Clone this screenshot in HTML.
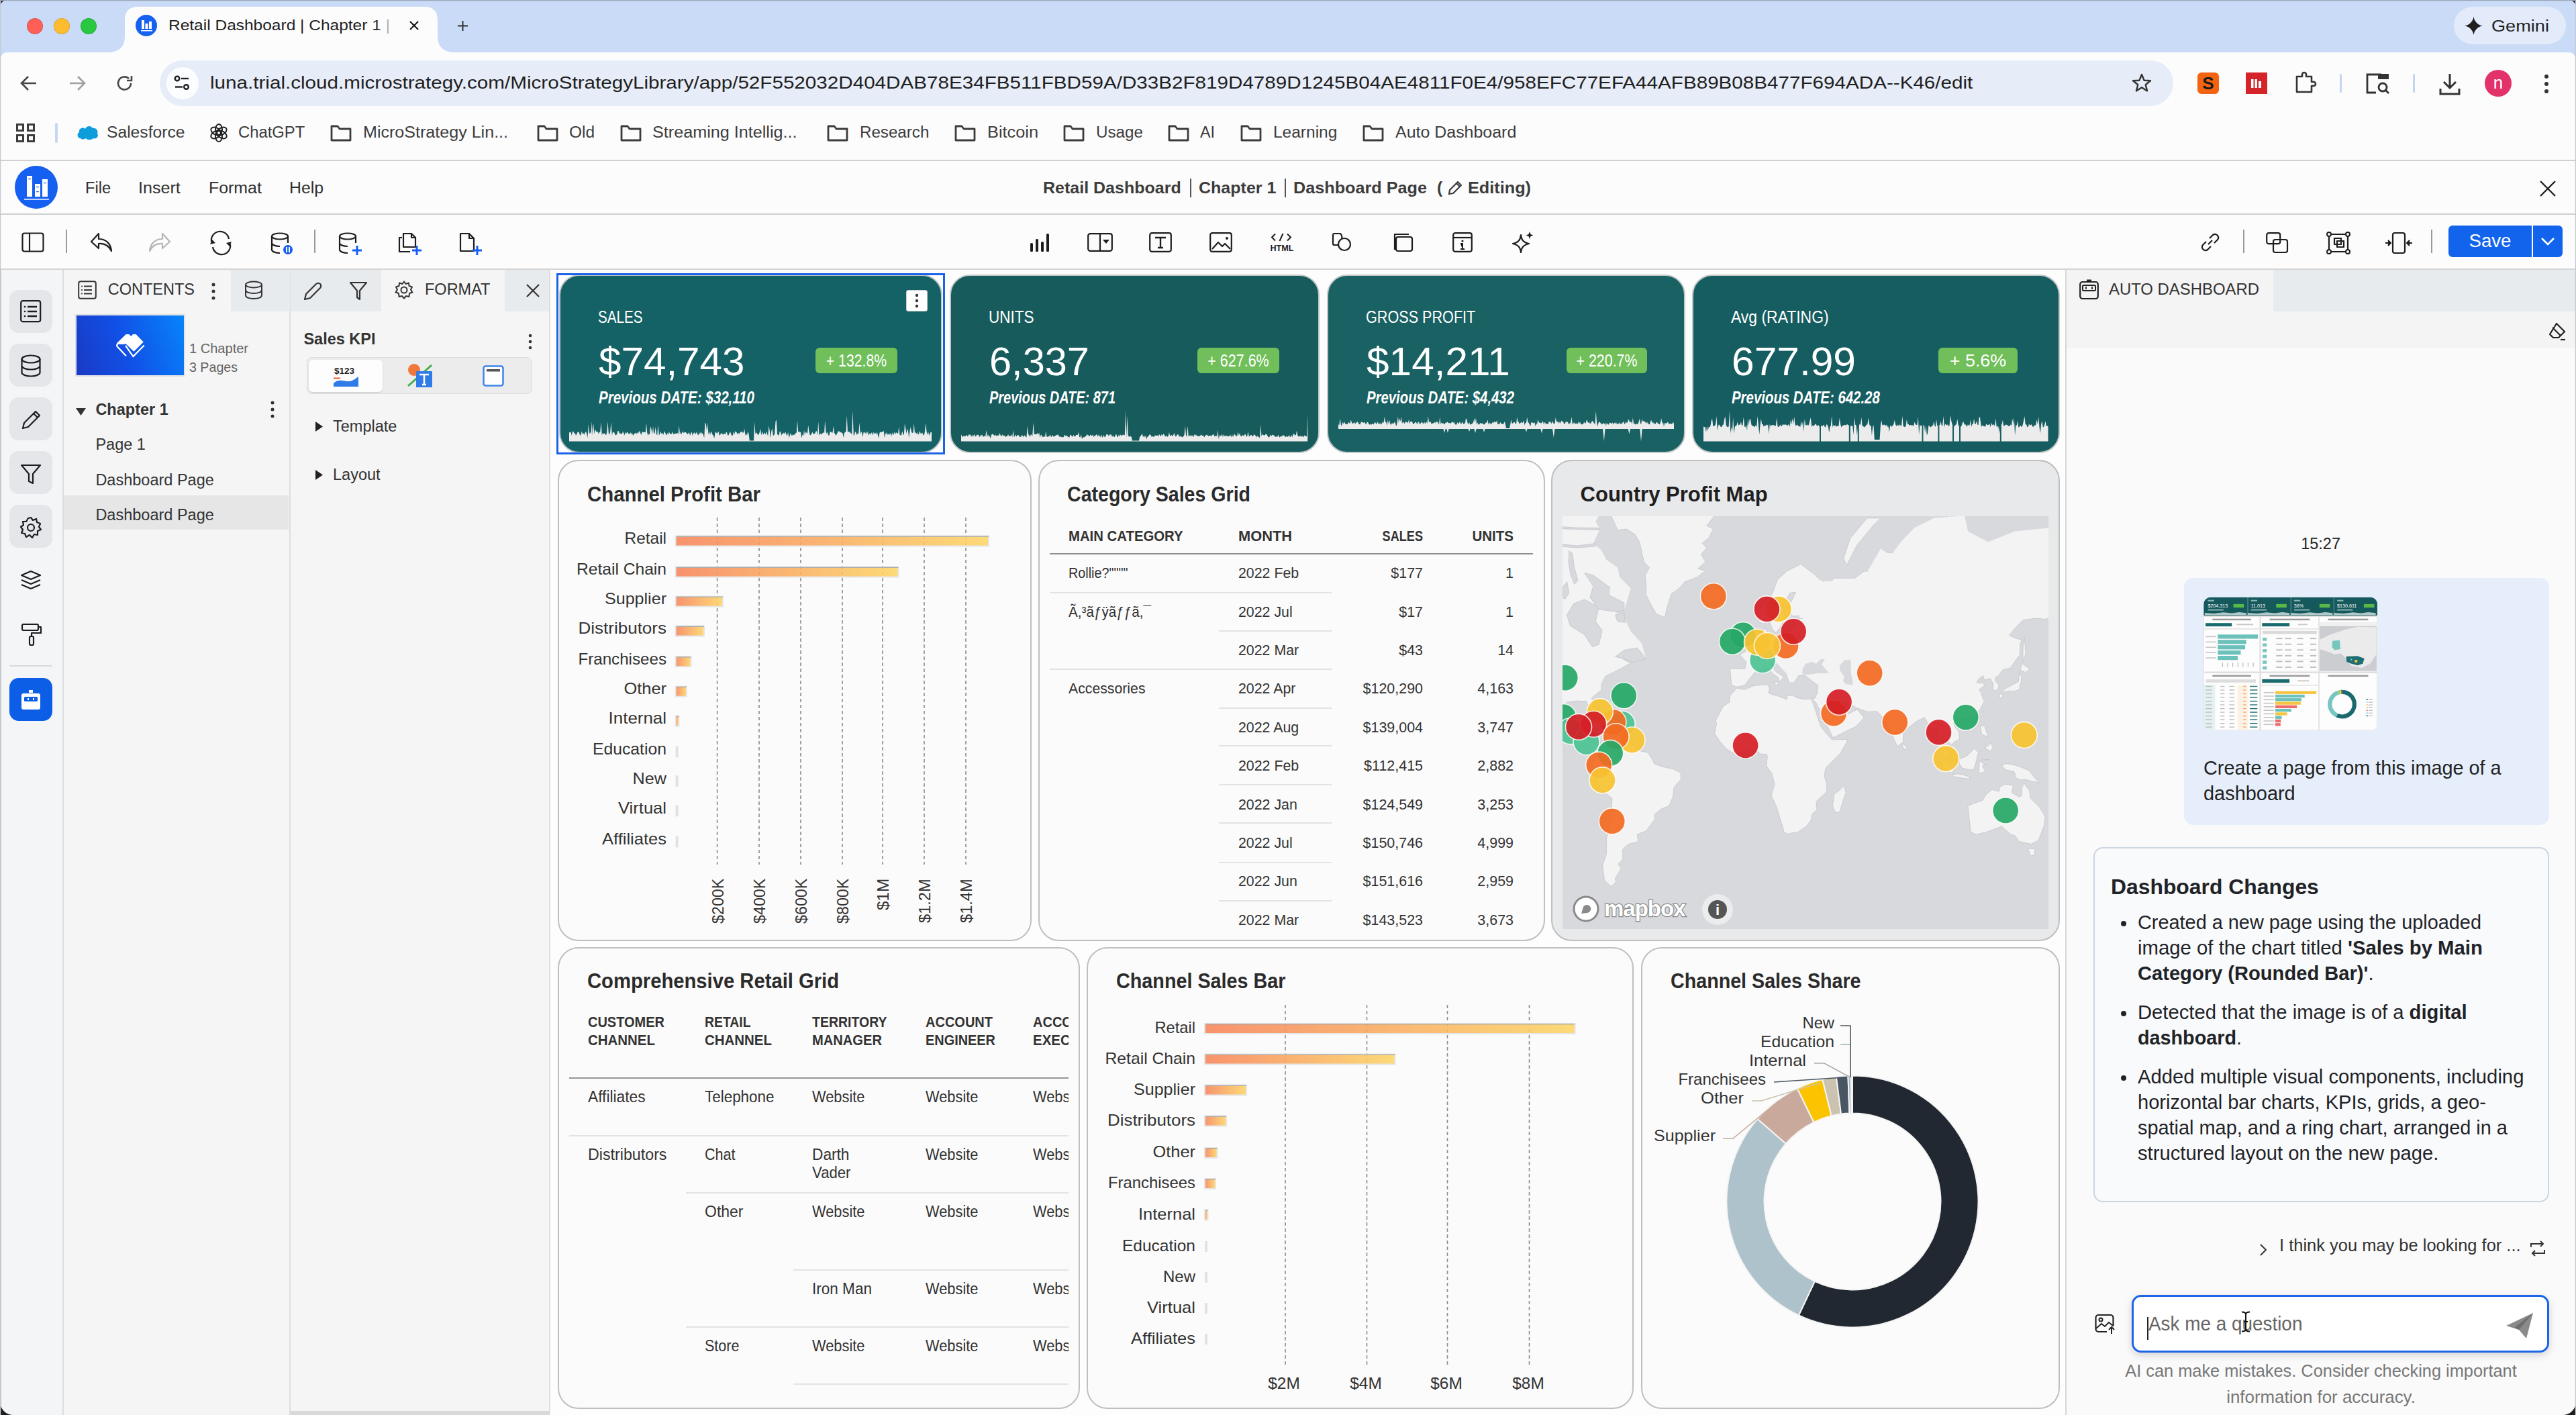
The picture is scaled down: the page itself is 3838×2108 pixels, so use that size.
<!DOCTYPE html><html><head><meta charset="utf-8"><title>Retail Dashboard</title>
<style>
html,body{margin:0;padding:0;}
body{width:3838px;height:2108px;position:relative;overflow:hidden;background:#fcfcfc;font-family:"Liberation Sans",sans-serif;}
.a{position:absolute;box-sizing:border-box;}
.t{position:absolute;white-space:nowrap;}
svg.a{overflow:visible;}
</style></head><body>
<div class="a" style="left:0.0px;top:0.0px;width:3838.0px;height:78.0px;background:#c9dbf6;"></div>
<svg class="a" style="left:160px;top:10px" width="520" height="68" viewBox="0 0 520 68"><path d="M0 68 Q26 68 26 44 L26 20 Q26 0 46 0 L472 0 Q492 0 492 20 L492 44 Q492 68 518 68 Z" fill="#fcfcfd"/></svg>
<div class="a" style="left:40.0px;top:27.0px;width:24.0px;height:24.0px;border-radius:50%;background:#fe5f57;border:1px solid rgba(0,0,0,0.12);"></div>
<div class="a" style="left:80.0px;top:27.0px;width:24.0px;height:24.0px;border-radius:50%;background:#febc2e;border:1px solid rgba(0,0,0,0.12);"></div>
<div class="a" style="left:120.0px;top:27.0px;width:24.0px;height:24.0px;border-radius:50%;background:#28c840;border:1px solid rgba(0,0,0,0.12);"></div>
<div class="a" style="left:202.0px;top:22.0px;width:32.0px;height:32.0px;border-radius:50%;background:#1661f0;"></div>
<svg class="a" style="left:202.0px;top:22.0px;" width="32" height="32" viewBox="0 0 32 32"><rect x="9" y="8" width="4" height="13" fill="#fff"/><rect x="14.5" y="13" width="4" height="8" fill="#fff"/><rect x="20" y="10" width="4" height="11" fill="#fff"/><rect x="8" y="23" width="17" height="1.5" fill="#fff"/></svg>
<div class="t" style="left:251.0px;top:27.4px;font-size:22.0px;line-height:22.0px;color:#1f1f1f;transform: scaleX(1.1135);transform-origin:0 0;">Retail Dashboard | Chapter 1 |</div>
<div class="a" style="left:560.0px;top:14.0px;width:40.0px;height:56.0px;background:linear-gradient(90deg,rgba(252,252,253,0),#fcfcfd 70%);"></div>
<svg class="a" style="left:609.0px;top:30.0px;" width="16" height="16" viewBox="0 0 16 16"><path d="M2 2L14 14M14 2L2 14" stroke="#1f1f1f" stroke-width="2.2"/></svg>
<svg class="a" style="left:681.0px;top:30.0px;" width="17" height="17" viewBox="0 0 17 17"><path d="M8.5 1V16M1 8.5H16" stroke="#333" stroke-width="2"/></svg>
<div class="a" style="left:3656.0px;top:10.0px;width:167.0px;height:56.0px;border-radius:28px;background:#e3ebfa;"></div>
<svg class="a" style="left:3672.0px;top:25.0px;" width="27" height="27" viewBox="0 0 27 27"><path d="M13.5 0 C14.5 7 20 12.5 27 13.5 C20 14.5 14.5 20 13.5 27 C12.5 20 7 14.5 0 13.5 C7 12.5 12.5 7 13.5 0Z" fill="#1f1f1f"/></svg>
<div class="t" style="left:3712.0px;top:27.5px;font-size:23.0px;line-height:23.0px;color:#1f1f1f;font-weight:500;transform: scaleX(1.1804);transform-origin:0 0;">Gemini</div>
<div class="a" style="left:0.0px;top:78.0px;width:3838.0px;height:80.0px;background:#fcfcfd;"></div>
<svg class="a" style="left:30.0px;top:112.0px;" width="26" height="24" viewBox="0 0 26 24"><path d="M24 12H3M12 2L2 12L12 22" stroke="#474747" stroke-width="2.6" fill="none"/></svg>
<svg class="a" style="left:102.0px;top:112.0px;" width="26" height="24" viewBox="0 0 26 24"><path d="M2 12H23M14 2L24 12L14 22" stroke="#a0a0a0" stroke-width="2.6" fill="none"/></svg>
<svg class="a" style="left:173.0px;top:111.0px;" width="26" height="26" viewBox="0 0 26 26"><path d="M22 13 A9.5 9.5 0 1 1 19 6" stroke="#474747" stroke-width="2.6" fill="none"/><path d="M23 2 V9 H16" stroke="#474747" stroke-width="2.6" fill="none"/></svg>
<div class="a" style="left:238.0px;top:90.0px;width:3000.0px;height:68.0px;border-radius:34px;background:#e7edf8;"></div>
<div class="a" style="left:248.0px;top:100.0px;width:48.0px;height:48.0px;border-radius:50%;background:#fcfdfe;"></div>
<svg class="a" style="left:258.0px;top:110.0px;" width="28" height="28" viewBox="0 0 28 28"><circle cx="6" cy="7" r="3.3" stroke="#222" stroke-width="2.4" fill="none"/><path d="M12 7H23" stroke="#222" stroke-width="2.4"/><circle cx="19.5" cy="19.5" r="3.3" stroke="#222" stroke-width="2.4" fill="none"/><path d="M3 19.5H14" stroke="#222" stroke-width="2.4"/></svg>
<div class="t" style="left:313.0px;top:110.1px;font-size:26.5px;line-height:26.5px;color:#1f1f1f;transform: scaleX(1.1178);transform-origin:0 0;">luna.trial.cloud.microstrategy.com/MicroStrategyLibrary/app/52F552032D404DAB78E34FB511FBD59A/D33B2F819D4789D1245B04AE4811F0E4/958EFC77EFA44AFB89B08B477F694ADA--K46/edit</div>
<svg class="a" style="left:3175.0px;top:108.0px;" width="32" height="32" viewBox="0 0 32 32"><path d="M16 3 L19.6 11.8 L29 12.3 L21.7 18.2 L24.1 27.4 L16 22.3 L7.9 27.4 L10.3 18.2 L3 12.3 L12.4 11.8 Z" stroke="#333" stroke-width="2.4" fill="none" stroke-linejoin="round"/></svg>
<div class="a" style="left:3274.0px;top:108.0px;width:32.0px;height:32.0px;border-radius:6px;background:#f4630f;"></div>
<div class="t" style="left:3290.0px;top:111.0px;font-size:26.0px;line-height:26.0px;color:#1a1a1a;font-weight:700;transform:translateX(-50%);transform-origin:50% 0;">S</div>
<div class="a" style="left:3346.0px;top:108.0px;width:32.0px;height:32.0px;background:#d5232a;"></div>
<svg class="a" style="left:3346.0px;top:108.0px;" width="32" height="32" viewBox="0 0 32 32"><rect x="8" y="10" width="3.5" height="13" fill="#fff"/><rect x="13.5" y="10" width="3.5" height="13" fill="#fff"/><rect x="19" y="13" width="4" height="10" fill="#fff"/></svg>
<svg class="a" style="left:3418.0px;top:106.0px;" width="34" height="34" viewBox="0 0 34 34"><path d="M4 8 H12 V5 A3 3 0 0 1 18 5 V8 H26 V16 H29 A3 3 0 0 1 29 22 H26 V31 H4 Z" stroke="#333" stroke-width="2.6" fill="none" stroke-linejoin="round"/></svg>
<div class="a" style="left:3486.0px;top:110.0px;width:3.0px;height:28.0px;background:#c4d5f2;border-radius:2px;"></div>
<svg class="a" style="left:3524.0px;top:108.0px;" width="38" height="34" viewBox="0 0 38 34"><path d="M16 30H3V3H24" stroke="#333" stroke-width="2.8" fill="none"/><rect x="19" y="2" width="16" height="8" fill="#333"/><circle cx="26" cy="22" r="6" stroke="#333" stroke-width="2.8" fill="none"/><path d="M30.5 26.5L35 31" stroke="#333" stroke-width="3"/></svg>
<div class="a" style="left:3595.0px;top:110.0px;width:3.0px;height:28.0px;background:#c4d5f2;border-radius:2px;"></div>
<svg class="a" style="left:3633.0px;top:108.0px;" width="34" height="34" viewBox="0 0 34 34"><path d="M17 2V22M8 14L17 23L26 14" stroke="#333" stroke-width="3" fill="none"/><path d="M3 24V32H31V24" stroke="#333" stroke-width="3" fill="none"/></svg>
<div class="a" style="left:3702.0px;top:104.0px;width:40.0px;height:40.0px;border-radius:50%;background:#e3326a;"></div>
<div class="t" style="left:3722.0px;top:110.0px;font-size:26.0px;line-height:26.0px;color:#fff;transform:translateX(-50%);transform-origin:50% 0;">n</div>
<svg class="a" style="left:3788.0px;top:110.0px;" width="12" height="30" viewBox="0 0 12 30"><circle cx="6" cy="4" r="3" fill="#333"/><circle cx="6" cy="15" r="3" fill="#333"/><circle cx="6" cy="26" r="3" fill="#333"/></svg>
<div class="a" style="left:0.0px;top:158.0px;width:3838.0px;height:80.0px;background:#fcfcfd;"></div>
<svg class="a" style="left:24.0px;top:184.0px;" width="28" height="28" viewBox="0 0 28 28"><rect x="1.5" y="1.5" width="9" height="9" stroke="#3c3c3c" stroke-width="3" fill="none"/><rect x="17.5" y="1.5" width="9" height="9" stroke="#3c3c3c" stroke-width="3" fill="none"/><rect x="1.5" y="17.5" width="9" height="9" stroke="#3c3c3c" stroke-width="3" fill="none"/><rect x="17.5" y="17.5" width="9" height="9" stroke="#3c3c3c" stroke-width="3" fill="none"/></svg>
<div class="a" style="left:82.0px;top:183.0px;width:4.0px;height:30.0px;background:#c7d7f3;border-radius:2px;"></div>
<svg class="a" style="left:114.0px;top:186.0px;" width="33" height="23" viewBox="0 0 33 23"><path d="M6 20 C1 20 0 13 4 11 C3 5 10 3 13 6 C15 1 22 1 24 5 C29 4 33 9 31 13 C34 17 29 22 25 20 C22 23 16 23 14 20 C11 22 8 22 6 20Z" fill="#0d9ddb"/></svg>
<div class="t" style="left:158.8px;top:186.1px;font-size:23.5px;line-height:23.5px;color:#3c3c3c;transform: scaleX(1.0486);transform-origin:0 0;">Salesforce</div>
<svg class="a" style="left:312.0px;top:184.0px;" width="28" height="28" viewBox="0 0 28 28"><g stroke="#222" stroke-width="2" fill="none"><ellipse cx="14" cy="9" rx="5" ry="8"/><ellipse cx="14" cy="9" rx="5" ry="8" transform="rotate(60 14 14)"/><ellipse cx="14" cy="9" rx="5" ry="8" transform="rotate(120 14 14)"/><ellipse cx="14" cy="9" rx="5" ry="8" transform="rotate(180 14 14)"/><ellipse cx="14" cy="9" rx="5" ry="8" transform="rotate(240 14 14)"/><ellipse cx="14" cy="9" rx="5" ry="8" transform="rotate(300 14 14)"/></g></svg>
<div class="t" style="left:354.8px;top:186.1px;font-size:23.5px;line-height:23.5px;color:#3c3c3c;transform: scaleX(1.0129);transform-origin:0 0;">ChatGPT</div>
<svg class="a" style="left:492.0px;top:185.0px;" width="32" height="27" viewBox="0 0 32 27"><path d="M2 3H11L14 7H30V24H2Z" stroke="#3c3c3c" stroke-width="2.8" fill="none" stroke-linejoin="round"/></svg>
<div class="t" style="left:540.8px;top:186.1px;font-size:23.5px;line-height:23.5px;color:#3c3c3c;transform: scaleX(1.0672);transform-origin:0 0;">MicroStrategy Lin...</div>
<svg class="a" style="left:799.7px;top:185.0px;" width="32" height="27" viewBox="0 0 32 27"><path d="M2 3H11L14 7H30V24H2Z" stroke="#3c3c3c" stroke-width="2.8" fill="none" stroke-linejoin="round"/></svg>
<div class="t" style="left:848.0px;top:186.1px;font-size:23.5px;line-height:23.5px;color:#3c3c3c;transform: scaleX(1.0393);transform-origin:0 0;">Old</div>
<svg class="a" style="left:924.0px;top:185.0px;" width="32" height="27" viewBox="0 0 32 27"><path d="M2 3H11L14 7H30V24H2Z" stroke="#3c3c3c" stroke-width="2.8" fill="none" stroke-linejoin="round"/></svg>
<div class="t" style="left:972.0px;top:186.1px;font-size:23.5px;line-height:23.5px;color:#3c3c3c;transform: scaleX(1.0716);transform-origin:0 0;">Streaming Intellig...</div>
<svg class="a" style="left:1232.0px;top:185.0px;" width="32" height="27" viewBox="0 0 32 27"><path d="M2 3H11L14 7H30V24H2Z" stroke="#3c3c3c" stroke-width="2.8" fill="none" stroke-linejoin="round"/></svg>
<div class="t" style="left:1280.7px;top:186.1px;font-size:23.5px;line-height:23.5px;color:#3c3c3c;transform: scaleX(1.0274);transform-origin:0 0;">Research</div>
<svg class="a" style="left:1422.0px;top:185.0px;" width="32" height="27" viewBox="0 0 32 27"><path d="M2 3H11L14 7H30V24H2Z" stroke="#3c3c3c" stroke-width="2.8" fill="none" stroke-linejoin="round"/></svg>
<div class="t" style="left:1470.5px;top:186.1px;font-size:23.5px;line-height:23.5px;color:#3c3c3c;transform: scaleX(1.0778);transform-origin:0 0;">Bitcoin</div>
<svg class="a" style="left:1584.0px;top:185.0px;" width="32" height="27" viewBox="0 0 32 27"><path d="M2 3H11L14 7H30V24H2Z" stroke="#3c3c3c" stroke-width="2.8" fill="none" stroke-linejoin="round"/></svg>
<div class="t" style="left:1632.8px;top:186.1px;font-size:23.5px;line-height:23.5px;color:#3c3c3c;transform: scaleX(1.0279);transform-origin:0 0;">Usage</div>
<svg class="a" style="left:1740.0px;top:185.0px;" width="32" height="27" viewBox="0 0 32 27"><path d="M2 3H11L14 7H30V24H2Z" stroke="#3c3c3c" stroke-width="2.8" fill="none" stroke-linejoin="round"/></svg>
<div class="t" style="left:1788.0px;top:186.1px;font-size:23.5px;line-height:23.5px;color:#3c3c3c;transform: scaleX(0.9909);transform-origin:0 0;">AI</div>
<svg class="a" style="left:1848.0px;top:185.0px;" width="32" height="27" viewBox="0 0 32 27"><path d="M2 3H11L14 7H30V24H2Z" stroke="#3c3c3c" stroke-width="2.8" fill="none" stroke-linejoin="round"/></svg>
<div class="t" style="left:1896.7px;top:186.1px;font-size:23.5px;line-height:23.5px;color:#3c3c3c;transform: scaleX(1.0424);transform-origin:0 0;">Learning</div>
<svg class="a" style="left:2030.0px;top:185.0px;" width="32" height="27" viewBox="0 0 32 27"><path d="M2 3H11L14 7H30V24H2Z" stroke="#3c3c3c" stroke-width="2.8" fill="none" stroke-linejoin="round"/></svg>
<div class="t" style="left:2078.8px;top:186.1px;font-size:23.5px;line-height:23.5px;color:#3c3c3c;transform: scaleX(1.0614);transform-origin:0 0;">Auto Dashboard</div>
<div class="a" style="left:0.0px;top:238.0px;width:3838.0px;height:2.0px;background:#d0d0d0;"></div>
<div class="a" style="left:0.0px;top:240.0px;width:3838.0px;height:78.0px;background:#fcfcfc;"></div>
<div class="a" style="left:22.0px;top:247.0px;width:64.0px;height:64.0px;border-radius:50%;background:#1560f1;"></div>
<svg class="a" style="left:22.0px;top:247.0px;" width="64" height="64" viewBox="0 0 64 64"><rect x="18" y="15" width="8" height="31" fill="#fff"/><rect x="30" y="27" width="8" height="19" fill="#fff"/><rect x="41" y="20" width="8" height="26" fill="#fff"/><rect x="14" y="49" width="37" height="1.6" fill="#fff"/><rect x="20" y="19" width="4" height="1.2" fill="#1560f1"/><rect x="32" y="31" width="4" height="1.2" fill="#1560f1"/><rect x="32" y="38" width="4" height="1.2" fill="#1560f1"/><rect x="43" y="25" width="4" height="1.2" fill="#1560f1"/></svg>
<div class="t" style="left:127.0px;top:269.1px;font-size:23.5px;line-height:23.5px;color:#2f2f2f;transform: scaleX(1.0037);transform-origin:0 0;">File</div>
<div class="t" style="left:206.0px;top:269.1px;font-size:23.5px;line-height:23.5px;color:#2f2f2f;transform: scaleX(1.0670);transform-origin:0 0;">Insert</div>
<div class="t" style="left:311.0px;top:269.1px;font-size:23.5px;line-height:23.5px;color:#2f2f2f;transform: scaleX(1.0588);transform-origin:0 0;">Format</div>
<div class="t" style="left:431.0px;top:269.1px;font-size:23.5px;line-height:23.5px;color:#2f2f2f;transform: scaleX(1.0556);transform-origin:0 0;">Help</div>
<div class="t" style="left:1554.0px;top:268.3px;font-size:24.5px;line-height:24.5px;color:#3c3c3c;font-weight:700;transform: scaleX(1.0208);transform-origin:0 0;">Retail Dashboard</div>
<div class="a" style="left:1773.0px;top:266.0px;width:2.0px;height:28.0px;background:#555;"></div>
<div class="t" style="left:1786.0px;top:268.3px;font-size:24.5px;line-height:24.5px;color:#3c3c3c;font-weight:700;transform: scaleX(1.0212);transform-origin:0 0;">Chapter 1</div>
<div class="a" style="left:1914.0px;top:266.0px;width:2.0px;height:28.0px;background:#555;"></div>
<div class="t" style="left:1927.0px;top:268.3px;font-size:24.5px;line-height:24.5px;color:#3c3c3c;font-weight:700;transform: scaleX(1.0293);transform-origin:0 0;">Dashboard Page</div>
<div class="t" style="left:2141.0px;top:268.3px;font-size:24.5px;line-height:24.5px;color:#3c3c3c;font-weight:700;">(</div>
<svg class="a" style="left:2155.0px;top:267.0px;" width="26" height="26" viewBox="0 0 26 26"><path d="M4 22 L5 16 L17 4 L22 9 L10 21 Z M15 6 L20 11" stroke="#3c3c3c" stroke-width="2.2" fill="none" stroke-linejoin="round"/></svg>
<div class="t" style="left:2187.0px;top:268.3px;font-size:24.5px;line-height:24.5px;color:#3c3c3c;font-weight:700;transform: scaleX(1.0308);transform-origin:0 0;">Editing)</div>
<svg class="a" style="left:3782.0px;top:267.0px;" width="28" height="28" viewBox="0 0 28 28"><path d="M3 3L25 25M25 3L3 25" stroke="#222" stroke-width="2.4"/></svg>
<div class="a" style="left:0.0px;top:318.0px;width:3838.0px;height:2.0px;background:#d0d0d0;"></div>
<div class="a" style="left:0.0px;top:320.0px;width:3838.0px;height:80.0px;background:#fcfcfc;"></div>
<svg class="a" style="left:32.0px;top:346.0px;" width="34" height="30" viewBox="0 0 34 30"><rect x="1.5" y="1.5" width="31" height="27" rx="3" stroke="#1d1d1f" stroke-width="2.2" fill="none" stroke-linejoin="round"/><path d="M12 1.5V28.5" stroke="#1d1d1f" stroke-width="2.2" fill="none" stroke-linejoin="round"/></svg>
<div class="a" style="left:98.0px;top:342.0px;width:2.0px;height:35.0px;background:#9a9a9a;"></div>
<svg class="a" style="left:134.0px;top:346.0px;" width="34" height="30" viewBox="0 0 34 30"><path d="M13 2 L2 14 L13 24 V17 C22 16 28 20 32 28 C31 17 24 10 13 10 Z" stroke="#1d1d1f" stroke-width="2.2" fill="none" stroke-linejoin="round"/></svg>
<svg class="a" style="left:221.0px;top:346.0px;" width="34" height="30" viewBox="0 0 34 30"><path d="M21 2 L32 14 L21 24 V17 C12 16 6 20 2 28 C3 17 10 10 21 10 Z" stroke="#b5b5b5" stroke-width="2.2" fill="none" stroke-linejoin="round"/></svg>
<svg class="a" style="left:311.0px;top:346.0px;" width="36" height="32" viewBox="0 0 36 32"><path d="M4 14 A13 13 0 0 1 30 10" stroke="#1d1d1f" stroke-width="2.2" fill="none" stroke-linejoin="round"/><path d="M32 18 A13 13 0 0 1 6 22" stroke="#1d1d1f" stroke-width="2.2" fill="none" stroke-linejoin="round"/><path d="M26 16 L31 21 L34 14Z" fill="#1d1d1f"/><path d="M10 16 L5 11 L2 18Z" fill="#1d1d1f"/></svg>
<svg class="a" style="left:403.0px;top:346.0px;" width="34" height="34" viewBox="0 0 34 34"><ellipse cx="14" cy="6" rx="12" ry="4.5" stroke="#1d1d1f" stroke-width="2.2" fill="none" stroke-linejoin="round"/><path d="M2 6V26C2 29 8 31 14 31M26 6V16M2 16C2 19 8 21 14 21" stroke="#1d1d1f" stroke-width="2.2" fill="none" stroke-linejoin="round"/><circle cx="26" cy="26" r="7" fill="#1560f1"/><rect x="23" y="22" width="2" height="8" fill="#fff"/><rect x="27" y="22" width="2" height="8" fill="#fff"/></svg>
<div class="a" style="left:468.0px;top:342.0px;width:2.0px;height:35.0px;background:#9a9a9a;"></div>
<svg class="a" style="left:504.0px;top:346.0px;" width="36" height="34" viewBox="0 0 36 34"><ellipse cx="14" cy="6" rx="12" ry="4.5" stroke="#1d1d1f" stroke-width="2.2" fill="none" stroke-linejoin="round"/><path d="M2 6V26C2 29 8 31 14 31M26 6V16M2 16C2 19 8 21 14 21" stroke="#1d1d1f" stroke-width="2.2" fill="none" stroke-linejoin="round"/><path d="M28 20V34M21 27H35" stroke="#1560f1" stroke-width="3"/></svg>
<svg class="a" style="left:593.0px;top:346.0px;" width="36" height="34" viewBox="0 0 36 34"><path d="M6 8H2V29H18" stroke="#1d1d1f" stroke-width="2.2" fill="none" stroke-linejoin="round"/><path d="M8 2H20L26 8V22H8Z" stroke="#1d1d1f" stroke-width="2.2" fill="none" stroke-linejoin="round"/><path d="M20 2V8H26" stroke="#1d1d1f" stroke-width="2.2" fill="none" stroke-linejoin="round"/><path d="M28 20V34M21 27H35" stroke="#1560f1" stroke-width="3"/></svg>
<svg class="a" style="left:683.0px;top:346.0px;" width="36" height="34" viewBox="0 0 36 34"><path d="M3 2H16L23 9V28H3Z" stroke="#1d1d1f" stroke-width="2.2" fill="none" stroke-linejoin="round"/><path d="M16 2V9H23" stroke="#1d1d1f" stroke-width="2.2" fill="none" stroke-linejoin="round"/><path d="M28 20V34M21 27H35" stroke="#1560f1" stroke-width="3"/></svg>
<svg class="a" style="left:1534.0px;top:346.0px;" width="30" height="30" viewBox="0 0 30 30"><g fill="#1d1d1f"><rect x="1" y="16" width="4" height="13" rx="1.5"/><rect x="9" y="10" width="4" height="19" rx="1.5"/><rect x="17" y="14" width="4" height="15" rx="1.5"/><rect x="25" y="2" width="4" height="27" rx="1.5"/></g></svg>
<svg class="a" style="left:1620.0px;top:347.0px;" width="38" height="28" viewBox="0 0 38 28"><rect x="1.2" y="1.2" width="35.6" height="25.6" rx="3" stroke="#1d1d1f" stroke-width="2.2" fill="none" stroke-linejoin="round"/><path d="M19 1V27" stroke="#1d1d1f" stroke-width="2.2" fill="none" stroke-linejoin="round"/><path d="M23 10H33L28 16Z" fill="#1d1d1f"/></svg>
<svg class="a" style="left:1712.0px;top:346.0px;" width="34" height="30" viewBox="0 0 34 30"><rect x="1.2" y="1.2" width="31.6" height="27.6" rx="3" stroke="#1d1d1f" stroke-width="2.2" fill="none" stroke-linejoin="round"/><path d="M9 8H25M17 8V23M13 23H21" stroke="#1d1d1f" stroke-width="2.4"/></svg>
<svg class="a" style="left:1802.0px;top:346.0px;" width="34" height="30" viewBox="0 0 34 30"><rect x="1.2" y="1.2" width="31.6" height="27.6" rx="3" stroke="#1d1d1f" stroke-width="2.2" fill="none" stroke-linejoin="round"/><path d="M4 25L13 15L19 21L23 17L31 25" stroke="#1d1d1f" stroke-width="2.2" fill="none" stroke-linejoin="round"/><circle cx="26" cy="9" r="2" fill="#1d1d1f"/></svg>
<svg class="a" style="left:1893.0px;top:347.0px;" width="32" height="13" viewBox="0 0 32 13"><path d="M7 1.5L2 6.5L7 11.5M25 1.5L30 6.5L25 11.5M18.5 1L13.5 12" stroke="#1d1d1f" stroke-width="2" fill="none"/></svg>
<div class="t" style="left:1909.5px;top:363.9px;font-size:12.5px;line-height:12.5px;color:#1d1d1f;font-weight:700;transform:translateX(-50%) scaleX(1.0081);transform-origin:50% 0;">HTML</div>
<svg class="a" style="left:1985.0px;top:346.0px;" width="30" height="30" viewBox="0 0 30 30"><path d="M14 10A8 8 0 0 0 12 2H3A2 2 0 0 0 1 4V17A2 2 0 0 0 3 19H9" stroke="#1d1d1f" stroke-width="2.2" fill="none" stroke-linejoin="round"/><circle cx="18" cy="18" r="9" stroke="#1d1d1f" stroke-width="2.2" fill="none" stroke-linejoin="round"/></svg>
<svg class="a" style="left:2072.0px;top:346.0px;" width="34" height="30" viewBox="0 0 34 30"><path d="M6 26V3H27" stroke="#1d1d1f" stroke-width="2.2" fill="none" stroke-linejoin="round"/><rect x="8" y="7" width="24" height="21" rx="3" stroke="#1d1d1f" stroke-width="2.2" fill="none" stroke-linejoin="round"/></svg>
<svg class="a" style="left:2164.0px;top:346.0px;" width="30" height="30" viewBox="0 0 30 30"><rect x="1.2" y="1.2" width="27.6" height="27.6" rx="3" stroke="#1d1d1f" stroke-width="2.2" fill="none" stroke-linejoin="round"/><path d="M1 8H29" stroke="#1d1d1f" stroke-width="2.2" fill="none" stroke-linejoin="round"/><circle cx="15" cy="13" r="1.6" fill="#1d1d1f"/><path d="M12 17H15V25M12 25H18" stroke="#1d1d1f" stroke-width="2"/></svg>
<svg class="a" style="left:2252.0px;top:344.0px;" width="34" height="34" viewBox="0 0 34 34"><path d="M14 6 C15 14 18 17 26 19 C18 21 15 24 14 32 C13 24 10 21 2 19 C10 17 13 14 14 6Z" stroke="#1d1d1f" stroke-width="2.2" fill="none" stroke-linejoin="round"/><path d="M27 1 L28.5 5 L32.5 6.5 L28.5 8 L27 12 L25.5 8 L21.5 6.5 L25.5 5Z" fill="#1d1d1f"/></svg>
<svg class="a" style="left:3276.0px;top:344.0px;" width="34" height="34" viewBox="0 0 34 34"><path d="M14 20L20 14" stroke="#1d1d1f" stroke-width="2.2" fill="none" stroke-linejoin="round"/><path d="M11 16L6 21A5 5 0 0 0 13 28L18 23" stroke="#1d1d1f" stroke-width="2.2" fill="none" stroke-linejoin="round"/><path d="M16 11L21 6A5 5 0 0 1 28 13L23 18" stroke="#1d1d1f" stroke-width="2.2" fill="none" stroke-linejoin="round"/></svg>
<div class="a" style="left:3342.0px;top:342.0px;width:2.0px;height:35.0px;background:#9a9a9a;"></div>
<svg class="a" style="left:3376.0px;top:346.0px;" width="34" height="32" viewBox="0 0 34 32"><rect x="1.2" y="1.2" width="20" height="16" rx="3" stroke="#1d1d1f" stroke-width="2.2" fill="none" stroke-linejoin="round"/><rect x="11" y="11" width="21" height="19" rx="3" stroke="#1d1d1f" stroke-width="2.2" fill="none" stroke-linejoin="round"/></svg>
<svg class="a" style="left:3466.0px;top:345.0px;" width="36" height="34" viewBox="0 0 36 34"><rect x="4" y="4" width="28" height="26" stroke="#1d1d1f" stroke-width="2.2" fill="none" stroke-linejoin="round"/><rect x="12" y="10" width="10" height="9" stroke="#1d1d1f" stroke-width="2.2" fill="none" stroke-linejoin="round"/><rect x="16" y="14" width="10" height="9" stroke="#1d1d1f" stroke-width="2.2" fill="none" stroke-linejoin="round"/><circle cx="4" cy="4" r="3" fill="#fcfcfc" stroke="#1d1d1f" stroke-width="2"/><circle cx="32" cy="4" r="3" fill="#fcfcfc" stroke="#1d1d1f" stroke-width="2"/><circle cx="4" cy="30" r="3" fill="#fcfcfc" stroke="#1d1d1f" stroke-width="2"/><circle cx="32" cy="30" r="3" fill="#fcfcfc" stroke="#1d1d1f" stroke-width="2"/></svg>
<svg class="a" style="left:3553.0px;top:345.0px;" width="42" height="34" viewBox="0 0 42 34"><rect x="12" y="2" width="18" height="30" rx="3" stroke="#1d1d1f" stroke-width="2.2" fill="none" stroke-linejoin="round"/><path d="M1 17H9M5 13L9 17L5 21" stroke="#1d1d1f" stroke-width="2" fill="#1d1d1f"/><path d="M41 17H33M37 13L33 17L37 21" stroke="#1d1d1f" stroke-width="2" fill="#1d1d1f"/></svg>
<div class="a" style="left:3622.0px;top:342.0px;width:2.0px;height:35.0px;background:#9a9a9a;"></div>
<div class="a" style="left:3648.0px;top:336.0px;width:124.0px;height:47.0px;background:#1264ec;border-radius:6px 0 0 6px;"></div>
<div class="t" style="left:3710.0px;top:346.1px;font-size:27.0px;line-height:27.0px;color:#fff;transform:translateX(-50%) scaleX(1.0236);transform-origin:50% 0;">Save</div>
<div class="a" style="left:3774.0px;top:336.0px;width:44.0px;height:47.0px;background:#1264ec;border-radius:0 6px 6px 0;"></div>
<svg class="a" style="left:3784.0px;top:350.0px;" width="24" height="18" viewBox="0 0 24 18"><path d="M3 5L12 14L21 5" stroke="#fff" stroke-width="2.6" fill="none"/></svg>
<div class="a" style="left:0.0px;top:400.0px;width:3838.0px;height:2.0px;background:#d4d4d4;"></div>
<div class="a" style="left:0.0px;top:402.0px;width:95.0px;height:1706.0px;background:#f4f5f7;border-right:2px solid #dcdde0;"></div>
<div class="a" style="left:0.0px;top:402.0px;width:1.5px;height:1706.0px;background:#c8c8c8;"></div>
<div class="a" style="left:14.0px;top:432.0px;width:64.0px;height:64.0px;border-radius:14px;background:#e4e6ea;"></div>
<div class="a" style="left:14.0px;top:512.0px;width:64.0px;height:64.0px;border-radius:14px;background:#e4e6ea;"></div>
<div class="a" style="left:14.0px;top:592.0px;width:64.0px;height:64.0px;border-radius:14px;background:#e4e6ea;"></div>
<div class="a" style="left:14.0px;top:672.0px;width:64.0px;height:64.0px;border-radius:14px;background:#e4e6ea;"></div>
<div class="a" style="left:14.0px;top:752.0px;width:64.0px;height:64.0px;border-radius:14px;background:#e4e6ea;"></div>
<svg class="a" style="left:30.0px;top:447.0px;" width="32" height="34" viewBox="0 0 32 34"><rect x="1.2" y="1.2" width="29" height="31" rx="3" stroke="#1d1d1f" stroke-width="2.2" fill="none" stroke-linejoin="round"/><path d="M11 10H25M11 17H25M11 24H25" stroke="#1d1d1f" stroke-width="2.4"/><circle cx="7" cy="10" r="1.3" fill="#1d1d1f"/><circle cx="7" cy="17" r="1.3" fill="#1d1d1f"/><circle cx="7" cy="24" r="1.3" fill="#1d1d1f"/></svg>
<svg class="a" style="left:30.0px;top:528.0px;" width="32" height="34" viewBox="0 0 32 34"><ellipse cx="16" cy="7" rx="13.5" ry="5.5" stroke="#1d1d1f" stroke-width="2.2" fill="none" stroke-linejoin="round"/><path d="M2.5 7V27C2.5 30 8.5 32.5 16 32.5C23.5 32.5 29.5 30 29.5 27V7M2.5 17C2.5 20 8.5 22.5 16 22.5C23.5 22.5 29.5 20 29.5 17" stroke="#1d1d1f" stroke-width="2.2" fill="none" stroke-linejoin="round"/></svg>
<svg class="a" style="left:31.0px;top:609.0px;" width="32" height="32" viewBox="0 0 32 32"><path d="M3 29L5 21L22 4L28 10L11 27Z M19 7L25 13" stroke="#1d1d1f" stroke-width="2.2" fill="none" stroke-linejoin="round"/></svg>
<svg class="a" style="left:30.0px;top:690.0px;" width="32" height="32" viewBox="0 0 32 32"><path d="M2 3H30L19 16V30L13 27V16Z" stroke="#1d1d1f" stroke-width="2.2" fill="none" stroke-linejoin="round"/></svg>
<svg class="a" style="left:29.0px;top:769.0px;" width="34" height="34" viewBox="0 0 34 34"><circle cx="17" cy="17" r="5" stroke="#1d1d1f" stroke-width="2.2" fill="none" stroke-linejoin="round"/><path d="M17 2L20 6L25 4L26 9L31 11L29 16L32 20L27 22L27 28L22 27L19 32L15 28L10 31L8 26L3 25L5 20L2 16L6 13L5 8L10 8L13 3Z" stroke="#1d1d1f" stroke-width="2.2" fill="none" stroke-linejoin="round"/></svg>
<svg class="a" style="left:30.0px;top:849.0px;" width="32" height="32" viewBox="0 0 32 32"><path d="M16 2L30 8L16 14L2 8Z" stroke="#1d1d1f" stroke-width="2.2" fill="none" stroke-linejoin="round"/><path d="M2 15L16 21L30 15M2 22L16 28L30 22" stroke="#1d1d1f" stroke-width="2.2" fill="none" stroke-linejoin="round"/></svg>
<svg class="a" style="left:31.0px;top:928.0px;" width="32" height="34" viewBox="0 0 32 34"><rect x="2" y="2" width="24" height="9" rx="2" stroke="#1d1d1f" stroke-width="2.2" fill="none" stroke-linejoin="round"/><path d="M26 6H30V15H16V20" stroke="#1d1d1f" stroke-width="2.2" fill="none" stroke-linejoin="round"/><rect x="13" y="20" width="6" height="13" rx="2" stroke="#1d1d1f" stroke-width="2.2" fill="none" stroke-linejoin="round"/></svg>
<div class="a" style="left:14.0px;top:991.0px;width:64.0px;height:2.0px;background:#d8d9dc;"></div>
<div class="a" style="left:14.0px;top:1010.0px;width:64.0px;height:64.0px;border-radius:14px;background:#0d5ee6;"></div>
<svg class="a" style="left:30.0px;top:1026.0px;" width="32" height="32" viewBox="0 0 32 32"><rect x="2" y="7" width="28" height="24" rx="3" fill="#fff"/><rect x="13" y="2" width="6" height="4" fill="#fff"/><rect x="6" y="12" width="20" height="7" rx="1.5" fill="#0d5ee6"/><rect x="11" y="14" width="2" height="3" fill="#fff"/><rect x="19" y="14" width="2" height="3" fill="#fff"/></svg>
<div class="a" style="left:95.0px;top:402.0px;width:338.0px;height:1706.0px;background:#f5f5f5;border-right:2px solid #dedede;"></div>
<div class="a" style="left:344.0px;top:402.0px;width:88.0px;height:62.0px;background:#e8ebee;"></div>
<svg class="a" style="left:116.0px;top:418.0px;" width="28" height="28" viewBox="0 0 28 28"><rect x="1.2" y="1.2" width="25.6" height="25.6" rx="3" stroke="#333" stroke-width="2" fill="none"/><path d="M9 8.5H21M9 14H21M9 19.5H21" stroke="#333" stroke-width="2"/><circle cx="6" cy="8.5" r="1.1" fill="#333"/><circle cx="6" cy="14" r="1.1" fill="#333"/><circle cx="6" cy="19.5" r="1.1" fill="#333"/></svg>
<div class="t" style="left:160.7px;top:420.1px;font-size:23.5px;line-height:23.5px;color:#333;">CONTENTS</div>
<svg class="a" style="left:314.0px;top:421.0px;" width="8" height="26" viewBox="0 0 8 26"><circle cx="4" cy="3" r="2.5" fill="#333"/><circle cx="4" cy="13" r="2.5" fill="#333"/><circle cx="4" cy="23" r="2.5" fill="#333"/></svg>
<svg class="a" style="left:364.0px;top:418.0px;" width="28" height="28" viewBox="0 0 28 28"><ellipse cx="14" cy="6" rx="12" ry="4.5" stroke="#333" stroke-width="2" fill="none"/><path d="M2 6V22C2 25 7 27 14 27C21 27 26 25 26 22V6M2 14C2 17 7 19 14 19C21 19 26 17 26 14" stroke="#333" stroke-width="2" fill="none"/></svg>
<div class="a" style="left:112.0px;top:468.0px;width:164.0px;height:93.0px;background:#e6e6e6;border:1px solid #dedede;"></div>
<div class="a" style="left:114.0px;top:470.0px;width:160.0px;height:89.0px;background:linear-gradient(70deg,#1a3ac4 0%,#1150e6 45%,#0784fb 100%);"></div>
<svg class="a" style="left:110.0px;top:465.0px;" width="170" height="100" viewBox="0 0 2406 1415"><path d="M905 655 L1100 468 L1165 468 L1205 510 L1245 468 L1310 468 L1468 628 L1265 832 L1105 675 Q1080 660 1060 680 L930 680 Z" fill="#fff"/><path d="M925 668 Q890 700 925 735 L1095 915" stroke="#fff" stroke-width="32" fill="none" stroke-linecap="round"/><path d="M1090 705 L1252 935 L1482 700" stroke="#fff" stroke-width="32" fill="none"/></svg>
<div class="t" style="left:282.0px;top:507.6px;font-size:21.0px;line-height:21.0px;color:#666;transform: scaleX(0.9546);transform-origin:0 0;">1 Chapter</div>
<div class="t" style="left:282.0px;top:535.5px;font-size:21.0px;line-height:21.0px;color:#666;transform: scaleX(0.9349);transform-origin:0 0;">3 Pages</div>
<svg class="a" style="left:112.7px;top:608.0px;" width="15" height="11" viewBox="0 0 15 11"><path d="M0 0H15L7.5 11Z" fill="#333"/></svg>
<div class="t" style="left:142.4px;top:599.1px;font-size:23.5px;line-height:23.5px;color:#333;font-weight:700;">Chapter 1</div>
<svg class="a" style="left:402.0px;top:597.0px;" width="8" height="26" viewBox="0 0 8 26"><circle cx="4" cy="3" r="2.5" fill="#333"/><circle cx="4" cy="13" r="2.5" fill="#333"/><circle cx="4" cy="23" r="2.5" fill="#333"/></svg>
<div class="t" style="left:142.4px;top:651.1px;font-size:23.5px;line-height:23.5px;color:#333;">Page 1</div>
<div class="t" style="left:142.4px;top:703.5px;font-size:23.5px;line-height:23.5px;color:#333;">Dashboard Page</div>
<div class="a" style="left:95.0px;top:738.0px;width:335.0px;height:51.0px;background:#e6e6e6;"></div>
<div class="t" style="left:142.4px;top:755.9px;font-size:23.5px;line-height:23.5px;color:#333;">Dashboard Page</div>
<div class="a" style="left:433.0px;top:402.0px;width:387.0px;height:1706.0px;background:#f5f5f5;border-right:2px solid #dedede;"></div>
<div class="a" style="left:433.0px;top:402.0px;width:135.0px;height:62.0px;background:#e8ebee;"></div>
<div class="a" style="left:752.0px;top:402.0px;width:66.0px;height:62.0px;background:#e8ebee;"></div>
<svg class="a" style="left:452.0px;top:418.0px;" width="30" height="30" viewBox="0 0 30 30"><path d="M2 28L4 20L19 5A3 3 0 0 1 25 11L10 26Z" stroke="#333" stroke-width="2.2" fill="none" stroke-linejoin="round"/></svg>
<svg class="a" style="left:520.0px;top:418.0px;" width="28" height="30" viewBox="0 0 28 30"><path d="M2 3H26L16 15V28L12 25V15Z" stroke="#333" stroke-width="2.2" fill="none" stroke-linejoin="round"/></svg>
<svg class="a" style="left:588.0px;top:418.0px;" width="28" height="28" viewBox="0 0 28 28"><circle cx="14" cy="14" r="4.5" stroke="#333" stroke-width="2" fill="none"/><path d="M14 1.5L16.5 5L21 3.5L21.5 8L26 9.5L24 13.5L26.5 17.5L22 19L21.5 24L17 23L14 26.5L11 23L6.5 24L6 19L1.5 17.5L4 13.5L2 9.5L6.5 8L7 3.5L11.5 5Z" stroke="#333" stroke-width="2" fill="none" stroke-linejoin="round"/></svg>
<div class="t" style="left:633.0px;top:420.1px;font-size:23.5px;line-height:23.5px;color:#333;">FORMAT</div>
<svg class="a" style="left:783.0px;top:422.0px;" width="22" height="22" viewBox="0 0 22 22"><path d="M2 2L20 20M20 2L2 20" stroke="#333" stroke-width="2.2"/></svg>
<div class="t" style="left:452.4px;top:493.9px;font-size:23.5px;line-height:23.5px;color:#333;font-weight:700;">Sales KPI</div>
<svg class="a" style="left:786.0px;top:497.0px;" width="8" height="24" viewBox="0 0 8 24"><circle cx="4" cy="3" r="2.3" fill="#333"/><circle cx="4" cy="12" r="2.3" fill="#333"/><circle cx="4" cy="21" r="2.3" fill="#333"/></svg>
<div class="a" style="left:457.0px;top:532.0px;width:336.0px;height:55.0px;border-radius:8px;background:#ececec;border:1.5px solid #dcdcdc;"></div>
<div class="a" style="left:460.0px;top:536.0px;width:110.0px;height:47.5px;border-radius:6px;background:#fdfdfd;box-shadow:0 1px 2px rgba(0,0,0,0.15);"></div>
<div class="t" style="left:513.0px;top:545.6px;font-size:13.5px;line-height:13.5px;color:#222;font-weight:700;transform:translateX(-50%);transform-origin:50% 0;">$123</div>
<svg class="a" style="left:497.0px;top:561.0px;" width="37" height="15" viewBox="0 0 37 15"><path d="M0 15V10C8 2 16 8 24 7C30 6 34 2 37 0V15Z" fill="#2f7ce8"/><rect x="0" y="1.5" width="10" height="1.8" fill="#f04e1c"/></svg>
<svg class="a" style="left:606.0px;top:541.0px;" width="40" height="38" viewBox="0 0 40 38"><circle cx="11" cy="10" r="9" fill="#f0783c"/><path d="M2 34L37 3" stroke="#3fae49" stroke-width="3"/><rect x="14" y="12" width="24" height="24" fill="#2f7ce8"/><path d="M19 17H33M26 17V32M23 32H29" stroke="#fff" stroke-width="2.6"/></svg>
<svg class="a" style="left:719.0px;top:544.0px;" width="32" height="32" viewBox="0 0 32 32"><rect x="1.5" y="1.5" width="29" height="29" rx="3" stroke="#3f84e8" stroke-width="2.5" fill="#fff"/><rect x="6" y="6" width="20" height="3.5" fill="#555"/></svg>
<svg class="a" style="left:469.6px;top:628.0px;" width="11" height="15" viewBox="0 0 11 15"><path d="M0 0V15L11 7.5Z" fill="#222"/></svg>
<div class="t" style="left:496.0px;top:623.6px;font-size:23.5px;line-height:23.5px;color:#333;">Template</div>
<svg class="a" style="left:469.6px;top:700.0px;" width="11" height="15" viewBox="0 0 11 15"><path d="M0 0V15L11 7.5Z" fill="#222"/></svg>
<div class="t" style="left:496.0px;top:695.7px;font-size:23.5px;line-height:23.5px;color:#333;">Layout</div>
<div class="a" style="left:433.0px;top:2102.0px;width:385.0px;height:6.0px;background:#d9d9d9;"></div>
<div class="a" style="left:820.0px;top:402.0px;width:2257.0px;height:1706.0px;background:#fdfdfd;"></div>
<div class="a" style="left:833.0px;top:409.0px;width:571.0px;height:266.0px;border-radius:30px;background:#146166;border:2px solid #c3c8c8;"></div>
<div class="t" style="left:891.0px;top:460.2px;font-size:25.0px;line-height:25.0px;color:#fff;transform: scaleX(0.8264);transform-origin:0 0;">SALES</div>
<div class="t" style="left:892.0px;top:509.2px;font-size:60.0px;line-height:60.0px;color:#fff;transform: scaleX(1.0027);transform-origin:0 0;">$74,743</div>
<div class="a" style="left:1215.0px;top:518.0px;width:122.0px;height:38.0px;border-radius:6px;background:#70bf5a;"></div>
<div class="t" style="left:1276.0px;top:524.8px;font-size:25.0px;line-height:25.0px;color:#fff;transform:translateX(-50%) scaleX(0.8509);transform-origin:50% 0;">+ 132.8%</div>
<div class="t" style="left:892.0px;top:580.4px;font-size:25.0px;line-height:25.0px;color:#fff;font-weight:700;font-style:italic;transform: scaleX(0.8211);transform-origin:0 0;">Previous DATE: $32,110</div>
<svg class="a" style="left:0;top:0" width="3838" height="700"><path d="M848.0 657.6 L848.0 644.7 L849.2 643.5 L850.5 643.9 L851.8 648.9 L853.0 642.5 L854.2 642.8 L855.5 645.8 L856.8 645.3 L858.0 649.0 L859.2 647.1 L860.5 643.7 L861.8 643.5 L863.0 644.8 L864.2 649.1 L865.5 647.6 L866.8 642.2 L868.0 647.1 L869.2 645.3 L870.5 647.7 L871.8 644.3 L873.0 642.8 L874.2 646.6 L875.5 652.1 L876.8 632.1 L878.0 646.7 L879.2 643.4 L880.5 646.9 L881.8 627.9 L883.0 648.9 L884.2 630.6 L885.5 646.5 L886.8 639.1 L888.0 642.4 L889.2 643.8 L890.5 642.5 L891.8 646.6 L893.0 643.7 L894.2 643.9 L895.5 628.4 L896.8 648.5 L898.0 644.8 L899.2 646.7 L900.5 645.3 L901.8 646.9 L903.0 648.6 L904.2 644.3 L905.5 627.8 L906.8 645.4 L908.0 647.4 L909.2 643.3 L910.5 628.8 L911.8 648.9 L913.0 643.2 L914.2 644.0 L915.5 644.7 L916.8 648.4 L918.0 648.1 L919.2 647.0 L920.5 642.1 L921.8 642.3 L923.0 645.7 L924.2 645.7 L925.5 646.3 L926.8 646.5 L928.0 642.4 L929.2 645.6 L930.5 648.5 L931.8 643.6 L933.0 646.6 L934.2 643.7 L935.5 644.5 L936.8 646.6 L938.0 647.1 L939.2 643.7 L940.5 647.0 L941.8 644.6 L943.0 649.0 L944.2 647.3 L945.5 645.9 L946.8 644.6 L948.0 646.7 L949.2 643.9 L950.5 646.6 L951.8 643.0 L953.0 642.3 L954.2 645.5 L955.5 647.9 L956.8 642.5 L958.0 644.3 L959.2 644.0 L960.5 643.6 L961.8 644.4 L963.0 630.6 L964.2 644.6 L965.5 648.9 L966.8 646.0 L968.0 647.6 L969.2 635.0 L970.5 639.7 L971.8 646.9 L973.0 635.1 L974.2 646.4 L975.5 645.0 L976.8 635.9 L978.0 647.2 L979.2 648.3 L980.5 633.0 L981.8 648.4 L983.0 646.7 L984.2 642.4 L985.5 646.2 L986.8 644.6 L988.0 648.1 L989.2 645.2 L990.5 642.3 L991.8 646.6 L993.0 649.1 L994.2 645.1 L995.5 648.1 L996.8 642.9 L998.0 646.1 L999.2 647.1 L1000.5 646.4 L1001.8 642.7 L1003.0 647.3 L1004.2 645.6 L1005.5 646.9 L1006.8 645.7 L1008.0 645.8 L1009.2 644.7 L1010.5 647.0 L1011.8 634.1 L1013.0 647.2 L1014.2 643.6 L1015.5 647.2 L1016.8 642.2 L1018.0 644.8 L1019.2 644.6 L1020.5 643.9 L1021.8 643.8 L1023.0 645.4 L1024.2 647.0 L1025.5 645.8 L1026.8 643.9 L1028.0 648.8 L1029.2 645.9 L1030.5 642.9 L1031.8 649.0 L1033.0 646.1 L1034.2 644.1 L1035.5 645.7 L1036.8 646.4 L1038.0 643.1 L1039.2 647.0 L1040.5 648.6 L1041.8 644.2 L1043.0 647.1 L1044.2 642.7 L1045.5 645.8 L1046.8 645.6 L1048.0 648.0 L1049.2 652.4 L1050.5 629.6 L1051.8 631.5 L1053.0 642.2 L1054.2 629.8 L1055.5 647.6 L1056.8 642.4 L1058.0 648.2 L1059.2 642.7 L1060.5 644.8 L1061.8 648.0 L1063.0 648.8 L1064.2 653.2 L1065.5 645.1 L1066.8 643.0 L1068.0 646.1 L1069.2 644.9 L1070.5 642.5 L1071.8 648.7 L1073.0 648.0 L1074.2 645.6 L1075.5 645.2 L1076.8 647.3 L1078.0 647.3 L1079.2 645.5 L1080.5 647.5 L1081.8 643.9 L1083.0 644.1 L1084.2 648.5 L1085.5 648.5 L1086.8 644.9 L1088.0 643.0 L1089.2 646.8 L1090.5 648.9 L1091.8 648.7 L1093.0 642.4 L1094.2 647.5 L1095.5 642.3 L1096.8 643.4 L1098.0 644.7 L1099.2 647.5 L1100.5 644.8 L1101.8 646.4 L1103.0 643.3 L1104.2 643.5 L1105.5 643.1 L1106.8 645.0 L1108.0 643.9 L1109.2 638.8 L1110.5 648.8 L1111.8 645.7 L1113.0 649.1 L1114.2 642.9 L1115.5 646.1 L1116.8 656.6 L1118.0 656.6 L1119.2 656.6 L1120.5 656.6 L1121.8 656.6 L1123.0 656.6 L1124.2 628.7 L1125.5 646.5 L1126.8 644.3 L1128.0 645.8 L1129.2 648.3 L1130.5 647.1 L1131.8 644.0 L1133.0 638.4 L1134.2 648.6 L1135.5 642.3 L1136.8 646.9 L1138.0 647.1 L1139.2 644.1 L1140.5 647.4 L1141.8 642.5 L1143.0 646.1 L1144.2 650.1 L1145.5 633.9 L1146.8 642.2 L1148.0 653.1 L1149.2 642.8 L1150.5 638.2 L1151.8 648.7 L1153.0 648.7 L1154.2 646.2 L1155.5 628.0 L1156.8 625.6 L1158.0 646.3 L1159.2 648.5 L1160.5 648.3 L1161.8 642.7 L1163.0 643.1 L1164.2 649.0 L1165.5 645.7 L1166.8 646.5 L1168.0 644.0 L1169.2 646.9 L1170.5 643.3 L1171.8 648.3 L1173.0 648.5 L1174.2 643.4 L1175.5 652.4 L1176.8 648.5 L1178.0 645.1 L1179.2 648.7 L1180.5 648.8 L1181.8 647.1 L1183.0 648.4 L1184.2 646.9 L1185.5 645.2 L1186.8 644.5 L1188.0 626.6 L1189.2 643.4 L1190.5 642.4 L1191.8 644.2 L1193.0 643.4 L1194.2 652.7 L1195.5 647.3 L1196.8 650.2 L1198.0 640.9 L1199.2 648.2 L1200.5 643.1 L1201.8 644.8 L1203.0 646.1 L1204.2 633.4 L1205.5 643.3 L1206.8 648.4 L1208.0 647.9 L1209.2 646.0 L1210.5 643.5 L1211.8 646.9 L1213.0 645.9 L1214.2 646.0 L1215.5 642.5 L1216.8 642.3 L1218.0 648.4 L1219.2 627.9 L1220.5 648.9 L1221.8 645.7 L1223.0 646.4 L1224.2 647.2 L1225.5 645.2 L1226.8 643.8 L1228.0 646.6 L1229.2 626.6 L1230.5 643.2 L1231.8 646.3 L1233.0 643.3 L1234.2 648.8 L1235.5 648.4 L1236.8 642.8 L1238.0 643.5 L1239.2 644.3 L1240.5 644.7 L1241.8 634.4 L1243.0 645.0 L1244.2 646.4 L1245.5 648.9 L1246.8 646.4 L1248.0 644.2 L1249.2 642.2 L1250.5 642.6 L1251.8 644.4 L1253.0 643.5 L1254.2 644.9 L1255.5 645.4 L1256.8 651.9 L1258.0 645.0 L1259.2 644.1 L1260.5 642.6 L1261.8 618.6 L1263.0 644.4 L1264.2 642.8 L1265.5 643.2 L1266.8 644.8 L1268.0 645.5 L1269.2 647.4 L1270.5 611.6 L1271.8 649.1 L1273.0 647.9 L1274.2 642.8 L1275.5 644.8 L1276.8 648.3 L1278.0 645.2 L1279.2 646.5 L1280.5 629.6 L1281.8 647.2 L1283.0 642.8 L1284.2 644.7 L1285.5 651.0 L1286.8 643.3 L1288.0 644.0 L1289.2 646.1 L1290.5 642.8 L1291.8 647.1 L1293.0 642.3 L1294.2 648.9 L1295.5 645.2 L1296.8 647.8 L1298.0 644.9 L1299.2 644.3 L1300.5 648.7 L1301.8 643.3 L1303.0 646.9 L1304.2 644.6 L1305.5 647.5 L1306.8 643.2 L1308.0 648.4 L1309.2 652.8 L1310.5 644.8 L1311.8 643.8 L1313.0 643.4 L1314.2 644.1 L1315.5 642.4 L1316.8 642.3 L1318.0 652.5 L1319.2 646.5 L1320.5 644.3 L1321.8 648.5 L1323.0 645.3 L1324.2 648.3 L1325.5 646.5 L1326.8 645.6 L1328.0 650.2 L1329.2 644.1 L1330.5 648.3 L1331.8 646.6 L1333.0 642.7 L1334.2 647.1 L1335.5 644.2 L1336.8 645.1 L1338.0 646.7 L1339.2 635.7 L1340.5 647.4 L1341.8 648.6 L1343.0 648.4 L1344.2 642.2 L1345.5 646.4 L1346.8 648.5 L1348.0 630.9 L1349.2 638.1 L1350.5 645.9 L1351.8 638.5 L1353.0 642.3 L1354.2 652.2 L1355.5 642.4 L1356.8 636.1 L1358.0 643.7 L1359.2 644.9 L1360.5 644.6 L1361.8 630.8 L1363.0 646.2 L1364.2 643.3 L1365.5 646.5 L1366.8 643.8 L1368.0 648.1 L1369.2 646.1 L1370.5 642.1 L1371.8 646.2 L1373.0 645.8 L1374.2 644.4 L1375.5 647.9 L1376.8 648.6 L1378.0 642.8 L1379.2 630.0 L1380.5 642.4 L1381.8 648.1 L1383.0 642.7 L1384.2 648.9 L1385.5 646.1 L1386.8 643.8 L1388.0 643.7 L1388.0 657.6 Z" fill="#ececec"/></svg>
<div class="a" style="left:1415.0px;top:409.0px;width:551.0px;height:266.0px;border-radius:30px;background:#175b5c;border:2px solid #c3c8c8;"></div>
<div class="t" style="left:1473.0px;top:460.2px;font-size:25.0px;line-height:25.0px;color:#fff;transform: scaleX(0.9002);transform-origin:0 0;">UNITS</div>
<div class="t" style="left:1474.0px;top:509.2px;font-size:60.0px;line-height:60.0px;color:#fff;transform: scaleX(0.9922);transform-origin:0 0;">6,337</div>
<div class="a" style="left:1784.0px;top:518.0px;width:122.0px;height:38.0px;border-radius:6px;background:#70bf5a;"></div>
<div class="t" style="left:1845.0px;top:524.8px;font-size:25.0px;line-height:25.0px;color:#fff;transform:translateX(-50%) scaleX(0.8594);transform-origin:50% 0;">+ 627.6%</div>
<div class="t" style="left:1474.0px;top:580.4px;font-size:25.0px;line-height:25.0px;color:#fff;font-weight:700;font-style:italic;transform: scaleX(0.7975);transform-origin:0 0;">Previous DATE: 871</div>
<svg class="a" style="left:0;top:0" width="3838" height="700"><path d="M1432.0 657.6 L1432.0 647.6 L1433.2 649.2 L1434.5 651.6 L1435.8 649.2 L1437.0 649.7 L1438.2 650.2 L1439.5 648.0 L1440.8 648.9 L1442.0 650.6 L1443.2 647.6 L1444.5 647.6 L1445.8 647.4 L1447.0 651.1 L1448.2 647.6 L1449.5 651.1 L1450.8 648.4 L1452.0 646.8 L1453.2 650.6 L1454.5 649.8 L1455.8 647.1 L1457.0 648.4 L1458.2 647.6 L1459.5 651.5 L1460.8 648.6 L1462.0 648.7 L1463.2 647.2 L1464.5 651.0 L1465.8 650.0 L1467.0 649.2 L1468.2 650.6 L1469.5 640.9 L1470.8 651.5 L1472.0 647.1 L1473.2 650.1 L1474.5 649.7 L1475.8 653.4 L1477.0 647.9 L1478.2 646.7 L1479.5 646.7 L1480.8 648.2 L1482.0 649.4 L1483.2 647.6 L1484.5 649.2 L1485.8 649.6 L1487.0 647.9 L1488.2 649.2 L1489.5 644.9 L1490.8 648.7 L1492.0 650.3 L1493.2 647.0 L1494.5 649.5 L1495.8 648.5 L1497.0 649.2 L1498.2 650.9 L1499.5 650.1 L1500.8 650.0 L1502.0 646.7 L1503.2 649.7 L1504.5 650.0 L1505.8 649.2 L1507.0 646.9 L1508.2 651.6 L1509.5 641.0 L1510.8 651.0 L1512.0 649.8 L1513.2 647.3 L1514.5 650.6 L1515.8 648.5 L1517.0 647.7 L1518.2 649.1 L1519.5 651.1 L1520.8 650.9 L1522.0 648.6 L1523.2 648.5 L1524.5 651.1 L1525.8 649.3 L1527.0 648.5 L1528.2 651.0 L1529.5 651.2 L1530.8 634.6 L1532.0 647.1 L1533.2 648.1 L1534.5 650.9 L1535.8 647.1 L1537.0 647.7 L1538.2 650.2 L1539.5 629.6 L1540.8 646.7 L1542.0 646.9 L1543.2 647.3 L1544.5 646.8 L1545.8 645.1 L1547.0 647.5 L1548.2 644.6 L1549.5 651.7 L1550.8 647.8 L1552.0 648.1 L1553.2 651.2 L1554.5 651.0 L1555.8 649.3 L1557.0 651.2 L1558.2 642.4 L1559.5 650.8 L1560.8 650.8 L1562.0 649.7 L1563.2 650.5 L1564.5 647.0 L1565.8 650.8 L1567.0 650.4 L1568.2 647.7 L1569.5 650.7 L1570.8 649.7 L1572.0 649.6 L1573.2 648.8 L1574.5 648.0 L1575.8 647.6 L1577.0 648.3 L1578.2 650.8 L1579.5 649.7 L1580.8 651.4 L1582.0 651.0 L1583.2 651.1 L1584.5 651.4 L1585.8 647.7 L1587.0 648.8 L1588.2 650.1 L1589.5 648.0 L1590.8 650.8 L1592.0 651.0 L1593.2 651.9 L1594.5 647.8 L1595.8 648.0 L1597.0 650.2 L1598.2 650.6 L1599.5 647.7 L1600.8 650.5 L1602.0 650.3 L1603.2 647.9 L1604.5 648.1 L1605.8 647.7 L1607.0 643.4 L1608.2 651.0 L1609.5 651.5 L1610.8 646.9 L1612.0 654.2 L1613.2 651.6 L1614.5 651.6 L1615.8 651.2 L1617.0 650.2 L1618.2 649.5 L1619.5 646.7 L1620.8 648.6 L1622.0 648.5 L1623.2 650.2 L1624.5 647.2 L1625.8 649.4 L1627.0 648.7 L1628.2 647.6 L1629.5 651.0 L1630.8 649.2 L1632.0 648.9 L1633.2 647.5 L1634.5 647.4 L1635.8 650.8 L1637.0 647.3 L1638.2 649.9 L1639.5 650.9 L1640.8 647.3 L1642.0 651.6 L1643.2 651.2 L1644.5 647.8 L1645.8 651.2 L1647.0 651.0 L1648.2 647.4 L1649.5 646.8 L1650.8 647.7 L1652.0 649.8 L1653.2 647.4 L1654.5 647.3 L1655.8 647.6 L1657.0 650.9 L1658.2 648.6 L1659.5 650.8 L1660.8 651.0 L1662.0 647.7 L1663.2 646.7 L1664.5 651.0 L1665.8 650.8 L1667.0 647.0 L1668.2 650.7 L1669.5 647.3 L1670.8 649.3 L1672.0 648.5 L1673.2 647.6 L1674.5 647.9 L1675.8 648.5 L1677.0 611.6 L1678.2 651.5 L1679.5 619.6 L1680.8 650.2 L1682.0 649.7 L1683.2 651.1 L1684.5 649.7 L1685.8 650.9 L1687.0 656.6 L1688.2 656.6 L1689.5 656.6 L1690.8 656.6 L1692.0 656.6 L1693.2 656.6 L1694.5 656.6 L1695.8 656.6 L1697.0 656.6 L1698.2 650.3 L1699.5 649.9 L1700.8 647.2 L1702.0 646.7 L1703.2 651.4 L1704.5 648.3 L1705.8 651.6 L1707.0 649.1 L1708.2 654.6 L1709.5 650.6 L1710.8 650.8 L1712.0 648.0 L1713.2 647.2 L1714.5 648.0 L1715.8 651.1 L1717.0 649.8 L1718.2 650.7 L1719.5 650.5 L1720.8 648.9 L1722.0 648.3 L1723.2 649.5 L1724.5 648.5 L1725.8 650.3 L1727.0 646.7 L1728.2 648.4 L1729.5 650.3 L1730.8 646.7 L1732.0 649.5 L1733.2 646.6 L1734.5 647.1 L1735.8 650.2 L1737.0 650.0 L1738.2 649.1 L1739.5 651.0 L1740.8 648.9 L1742.0 644.0 L1743.2 650.1 L1744.5 648.6 L1745.8 648.0 L1747.0 650.2 L1748.2 648.0 L1749.5 645.3 L1750.8 649.0 L1752.0 650.8 L1753.2 648.4 L1754.5 647.1 L1755.8 647.6 L1757.0 651.0 L1758.2 649.2 L1759.5 650.2 L1760.8 650.9 L1762.0 651.5 L1763.2 650.0 L1764.5 648.1 L1765.8 634.6 L1767.0 648.5 L1768.2 650.7 L1769.5 634.6 L1770.8 650.5 L1772.0 648.8 L1773.2 648.6 L1774.5 650.6 L1775.8 647.9 L1777.0 649.6 L1778.2 651.0 L1779.5 647.1 L1780.8 649.1 L1782.0 647.1 L1783.2 649.8 L1784.5 649.7 L1785.8 649.5 L1787.0 650.1 L1788.2 649.2 L1789.5 647.2 L1790.8 648.7 L1792.0 649.3 L1793.2 649.3 L1794.5 651.5 L1795.8 648.6 L1797.0 648.4 L1798.2 647.4 L1799.5 649.0 L1800.8 649.8 L1802.0 649.2 L1803.2 648.7 L1804.5 649.9 L1805.8 648.5 L1807.0 647.5 L1808.2 646.7 L1809.5 650.3 L1810.8 649.8 L1812.0 648.5 L1813.2 650.7 L1814.5 640.8 L1815.8 654.5 L1817.0 648.4 L1818.2 649.2 L1819.5 649.2 L1820.8 646.6 L1822.0 651.4 L1823.2 646.7 L1824.5 649.8 L1825.8 649.7 L1827.0 648.4 L1828.2 650.6 L1829.5 648.8 L1830.8 650.6 L1832.0 649.0 L1833.2 648.2 L1834.5 651.5 L1835.8 647.3 L1837.0 651.2 L1838.2 648.3 L1839.5 646.6 L1840.8 648.8 L1842.0 649.9 L1843.2 649.4 L1844.5 643.6 L1845.8 648.9 L1847.0 645.0 L1848.2 649.0 L1849.5 650.6 L1850.8 648.6 L1852.0 648.6 L1853.2 649.4 L1854.5 647.3 L1855.8 646.9 L1857.0 650.6 L1858.2 650.2 L1859.5 643.0 L1860.8 650.6 L1862.0 649.4 L1863.2 648.3 L1864.5 648.0 L1865.8 649.8 L1867.0 650.2 L1868.2 646.8 L1869.5 648.3 L1870.8 649.1 L1872.0 651.6 L1873.2 648.9 L1874.5 651.5 L1875.8 650.1 L1877.0 653.5 L1878.2 632.6 L1879.5 650.1 L1880.8 647.0 L1882.0 647.7 L1883.2 648.4 L1884.5 648.4 L1885.8 646.6 L1887.0 647.0 L1888.2 648.5 L1889.5 651.3 L1890.8 651.5 L1892.0 650.0 L1893.2 647.3 L1894.5 649.7 L1895.8 647.5 L1897.0 648.3 L1898.2 648.6 L1899.5 650.4 L1900.8 650.7 L1902.0 650.2 L1903.2 650.8 L1904.5 647.6 L1905.8 651.0 L1907.0 651.4 L1908.2 649.6 L1909.5 650.4 L1910.8 648.7 L1912.0 648.4 L1913.2 648.8 L1914.5 650.4 L1915.8 651.1 L1917.0 649.5 L1918.2 651.1 L1919.5 649.9 L1920.8 648.2 L1922.0 651.2 L1923.2 650.6 L1924.5 647.9 L1925.8 651.6 L1927.0 645.6 L1928.2 647.2 L1929.5 648.1 L1930.8 648.5 L1932.0 641.6 L1933.2 648.3 L1934.5 650.4 L1935.8 649.7 L1937.0 650.4 L1938.2 648.4 L1939.5 651.0 L1940.8 649.6 L1942.0 651.4 L1943.2 648.8 L1944.5 648.9 L1945.8 650.3 L1947.0 650.0 L1948.2 616.6 L1948.2 657.6 Z" fill="#ececec"/></svg>
<div class="a" style="left:1977.0px;top:409.0px;width:534.0px;height:266.0px;border-radius:30px;background:#196163;border:2px solid #c3c8c8;"></div>
<div class="t" style="left:2035.0px;top:460.2px;font-size:25.0px;line-height:25.0px;color:#fff;transform: scaleX(0.8644);transform-origin:0 0;">GROSS PROFIT</div>
<div class="t" style="left:2036.0px;top:509.2px;font-size:60.0px;line-height:60.0px;color:#fff;transform: scaleX(1.0063);transform-origin:0 0;">$14,211</div>
<div class="a" style="left:2334.0px;top:518.0px;width:120.0px;height:38.0px;border-radius:6px;background:#70bf5a;"></div>
<div class="t" style="left:2394.0px;top:524.8px;font-size:25.0px;line-height:25.0px;color:#fff;transform:translateX(-50%) scaleX(0.8575);transform-origin:50% 0;">+ 220.7%</div>
<div class="t" style="left:2036.0px;top:580.4px;font-size:25.0px;line-height:25.0px;color:#fff;font-weight:700;font-style:italic;transform: scaleX(0.8133);transform-origin:0 0;">Previous DATE: $4,432</div>
<svg class="a" style="left:0;top:0" width="3838" height="700"><path d="M1994.0 639.0 L1994.0 631.2 L1995.2 634.3 L1996.5 623.4 L1997.8 632.6 L1999.0 634.7 L2000.2 628.7 L2001.5 631.7 L2002.8 628.1 L2004.0 630.8 L2005.2 632.6 L2006.5 631.4 L2007.8 632.2 L2009.0 628.7 L2010.2 629.9 L2011.5 630.9 L2012.8 625.6 L2014.0 629.4 L2015.2 631.2 L2016.5 630.5 L2017.8 628.8 L2019.0 631.6 L2020.2 630.2 L2021.5 629.2 L2022.8 627.9 L2024.0 630.7 L2025.2 632.0 L2026.5 632.6 L2027.8 629.0 L2029.0 628.4 L2030.2 629.3 L2031.5 629.9 L2032.8 628.6 L2034.0 630.4 L2035.2 632.5 L2036.5 629.6 L2037.8 628.7 L2039.0 630.9 L2040.2 632.7 L2041.5 632.0 L2042.8 632.5 L2044.0 632.2 L2045.2 630.8 L2046.5 632.4 L2047.8 630.1 L2049.0 628.7 L2050.2 631.4 L2051.5 631.0 L2052.8 628.0 L2054.0 631.9 L2055.2 631.6 L2056.5 629.9 L2057.8 632.8 L2059.0 631.0 L2060.2 628.0 L2061.5 630.2 L2062.8 620.7 L2064.0 628.9 L2065.2 628.8 L2066.5 634.0 L2067.8 625.5 L2069.0 632.0 L2070.2 625.9 L2071.5 632.3 L2072.8 632.7 L2074.0 629.7 L2075.2 631.5 L2076.5 631.0 L2077.8 628.6 L2079.0 630.5 L2080.2 634.9 L2081.5 631.5 L2082.8 620.3 L2084.0 630.2 L2085.2 623.3 L2086.5 627.9 L2087.8 621.0 L2089.0 631.0 L2090.2 628.9 L2091.5 628.9 L2092.8 631.7 L2094.0 627.9 L2095.2 628.8 L2096.5 629.1 L2097.8 630.2 L2099.0 625.0 L2100.2 631.5 L2101.5 628.0 L2102.8 628.1 L2104.0 628.0 L2105.2 631.7 L2106.5 631.8 L2107.8 629.7 L2109.0 628.6 L2110.2 629.5 L2111.5 632.4 L2112.8 628.3 L2114.0 629.0 L2115.2 631.9 L2116.5 631.1 L2117.8 627.9 L2119.0 630.8 L2120.2 629.2 L2121.5 632.2 L2122.8 628.3 L2124.0 632.1 L2125.2 627.9 L2126.5 631.0 L2127.8 620.2 L2129.0 629.6 L2130.2 628.1 L2131.5 628.4 L2132.8 631.7 L2134.0 631.3 L2135.2 629.9 L2136.5 630.7 L2137.8 628.2 L2139.0 630.5 L2140.2 628.3 L2141.5 628.2 L2142.8 630.1 L2144.0 632.7 L2145.2 621.4 L2146.5 631.9 L2147.8 629.2 L2149.0 631.2 L2150.2 630.0 L2151.5 632.3 L2152.8 631.6 L2154.0 628.9 L2155.2 630.0 L2156.5 628.2 L2157.8 629.7 L2159.0 630.2 L2160.2 630.5 L2161.5 630.4 L2162.8 629.3 L2164.0 628.1 L2165.2 630.0 L2166.5 628.6 L2167.8 632.2 L2169.0 632.4 L2170.2 632.4 L2171.5 628.9 L2172.8 632.0 L2174.0 629.5 L2175.2 628.4 L2176.5 631.7 L2177.8 630.8 L2179.0 627.9 L2180.2 632.0 L2181.5 630.2 L2182.8 631.8 L2184.0 623.1 L2185.2 624.7 L2186.5 629.7 L2187.8 632.5 L2189.0 628.9 L2190.2 632.3 L2191.5 632.6 L2192.8 631.4 L2194.0 630.7 L2195.2 628.7 L2196.5 623.0 L2197.8 629.9 L2199.0 622.2 L2200.2 633.1 L2201.5 629.6 L2202.8 632.4 L2204.0 632.5 L2205.2 630.5 L2206.5 630.0 L2207.8 631.5 L2209.0 630.2 L2210.2 632.3 L2211.5 632.5 L2212.8 631.2 L2214.0 629.0 L2215.2 630.3 L2216.5 625.2 L2217.8 632.7 L2219.0 630.0 L2220.2 630.4 L2221.5 632.3 L2222.8 630.6 L2224.0 628.6 L2225.2 630.3 L2226.5 627.9 L2227.8 628.6 L2229.0 629.6 L2230.2 626.1 L2231.5 632.4 L2232.8 631.5 L2234.0 632.4 L2235.2 628.4 L2236.5 631.4 L2237.8 631.3 L2239.0 632.0 L2240.2 631.5 L2241.5 627.9 L2242.8 631.6 L2244.0 638.0 L2245.2 638.0 L2246.5 638.0 L2247.8 638.0 L2249.0 638.0 L2250.2 632.4 L2251.5 624.9 L2252.8 631.6 L2254.0 630.2 L2255.2 629.5 L2256.5 628.4 L2257.8 631.2 L2259.0 632.1 L2260.2 621.2 L2261.5 628.3 L2262.8 629.1 L2264.0 632.1 L2265.2 630.3 L2266.5 628.8 L2267.8 629.9 L2269.0 629.4 L2270.2 626.1 L2271.5 633.4 L2272.8 630.0 L2274.0 629.7 L2275.2 621.4 L2276.5 629.1 L2277.8 630.1 L2279.0 632.5 L2280.2 635.1 L2281.5 629.2 L2282.8 629.1 L2284.0 630.3 L2285.2 630.4 L2286.5 629.0 L2287.8 635.5 L2289.0 631.5 L2290.2 631.3 L2291.5 625.1 L2292.8 629.4 L2294.0 629.4 L2295.2 630.2 L2296.5 630.5 L2297.8 628.3 L2299.0 627.9 L2300.2 632.7 L2301.5 628.7 L2302.8 630.6 L2304.0 631.8 L2305.2 631.7 L2306.5 632.1 L2307.8 628.0 L2309.0 628.7 L2310.2 628.4 L2311.5 631.6 L2312.8 627.0 L2314.0 630.3 L2315.2 631.3 L2316.5 631.1 L2317.8 621.7 L2319.0 628.6 L2320.2 628.2 L2321.5 628.3 L2322.8 630.9 L2324.0 627.8 L2325.2 631.0 L2326.5 626.3 L2327.8 628.6 L2329.0 628.1 L2330.2 631.5 L2331.5 631.9 L2332.8 628.0 L2334.0 628.7 L2335.2 628.2 L2336.5 630.1 L2337.8 632.6 L2339.0 630.5 L2340.2 629.6 L2341.5 621.0 L2342.8 632.2 L2344.0 631.1 L2345.2 629.1 L2346.5 631.5 L2347.8 631.3 L2349.0 630.8 L2350.2 632.0 L2351.5 628.3 L2352.8 631.7 L2354.0 627.8 L2355.2 632.1 L2356.5 632.3 L2357.8 632.3 L2359.0 631.5 L2360.2 628.4 L2361.5 630.7 L2362.8 630.2 L2364.0 625.1 L2365.2 628.0 L2366.5 630.3 L2367.8 628.5 L2369.0 631.4 L2370.2 630.8 L2371.5 628.0 L2372.8 626.8 L2374.0 629.3 L2375.2 630.4 L2376.5 632.8 L2377.8 612.0 L2379.0 628.5 L2380.2 635.5 L2381.5 630.2 L2382.8 628.1 L2384.0 629.6 L2385.2 630.5 L2386.5 632.6 L2387.8 631.6 L2389.0 629.6 L2390.2 632.2 L2391.5 629.6 L2392.8 634.4 L2394.0 629.9 L2395.2 631.7 L2396.5 632.7 L2397.8 630.5 L2399.0 629.6 L2400.2 630.4 L2401.5 631.6 L2402.8 629.3 L2404.0 632.7 L2405.2 629.4 L2406.5 631.5 L2407.8 628.2 L2409.0 632.6 L2410.2 630.7 L2411.5 631.8 L2412.8 629.1 L2414.0 631.8 L2415.2 631.2 L2416.5 631.6 L2417.8 629.0 L2419.0 628.0 L2420.2 631.9 L2421.5 630.7 L2422.8 628.1 L2424.0 630.8 L2425.2 627.9 L2426.5 624.2 L2427.8 628.3 L2429.0 629.1 L2430.2 628.1 L2431.5 631.9 L2432.8 622.3 L2434.0 630.9 L2435.2 631.1 L2436.5 632.8 L2437.8 631.0 L2439.0 632.2 L2440.2 631.8 L2441.5 628.7 L2442.8 623.7 L2444.0 630.9 L2445.2 631.8 L2446.5 624.1 L2447.8 628.7 L2449.0 626.6 L2450.2 628.2 L2451.5 629.1 L2452.8 631.1 L2454.0 628.0 L2455.2 631.5 L2456.5 631.2 L2457.8 632.8 L2459.0 628.2 L2460.2 625.4 L2461.5 630.4 L2462.8 628.0 L2464.0 631.5 L2465.2 630.3 L2466.5 631.9 L2467.8 629.1 L2469.0 628.9 L2470.2 631.2 L2471.5 631.0 L2472.8 632.4 L2474.0 629.0 L2475.2 623.1 L2476.5 631.2 L2477.8 628.4 L2479.0 635.7 L2480.2 630.3 L2481.5 630.6 L2482.8 630.7 L2484.0 629.4 L2485.2 628.6 L2486.5 632.2 L2487.8 631.3 L2489.0 630.9 L2490.2 631.8 L2491.5 631.6 L2492.8 628.4 L2494.0 631.2 L2494.0 639.0 Z" fill="#ececec"/><path d="M2150.2 638 L2152.0 645.0 L2153.8 638 Z" fill="#ececec"/><path d="M2155.2 638 L2157.0 645.0 L2158.8 638 Z" fill="#ececec"/><path d="M2196.2 638 L2198.0 645.0 L2199.8 638 Z" fill="#ececec"/><path d="M2209.2 638 L2211.0 644.0 L2212.8 638 Z" fill="#ececec"/><path d="M2272.2 638 L2274.0 643.5 L2275.8 638 Z" fill="#ececec"/><path d="M2295.2 638 L2297.0 645.5 L2298.8 638 Z" fill="#ececec"/><path d="M2313.0 638 L2314.8 652.0 L2316.6 638 Z" fill="#ececec"/><path d="M2388.0 638 L2389.8 657.6 L2391.6 638 Z" fill="#ececec"/><path d="M2425.6 638 L2427.4 646.7 L2429.2 638 Z" fill="#ececec"/><path d="M2443.2 638 L2445.0 657.6 L2446.8 638 Z" fill="#ececec"/><path d="M2187.2 638 L2189.0 643.0 L2190.8 638 Z" fill="#ececec"/></svg>
<div class="a" style="left:2521.0px;top:409.0px;width:548.0px;height:266.0px;border-radius:30px;background:#165d61;border:2px solid #c3c8c8;"></div>
<div class="t" style="left:2579.0px;top:460.2px;font-size:25.0px;line-height:25.0px;color:#fff;transform: scaleX(0.9168);transform-origin:0 0;">Avg (RATING)</div>
<div class="t" style="left:2580.0px;top:509.2px;font-size:60.0px;line-height:60.0px;color:#fff;transform: scaleX(1.0079);transform-origin:0 0;">677.99</div>
<div class="a" style="left:2888.0px;top:518.0px;width:118.0px;height:38.0px;border-radius:6px;background:#70bf5a;"></div>
<div class="t" style="left:2947.0px;top:524.8px;font-size:25.0px;line-height:25.0px;color:#fff;transform:translateX(-50%) scaleX(1.0758);transform-origin:50% 0;">+ 5.6%</div>
<div class="t" style="left:2580.0px;top:580.4px;font-size:25.0px;line-height:25.0px;color:#fff;font-weight:700;font-style:italic;transform: scaleX(0.8163);transform-origin:0 0;">Previous DATE: 642.28</div>
<svg class="a" style="left:0;top:0" width="3838" height="700"><path d="M2538.0 657.6 L2538.0 635.5 L2539.3 636.0 L2540.6 636.2 L2541.9 644.1 L2543.2 634.3 L2544.5 642.5 L2545.8 636.2 L2547.1 636.5 L2548.4 634.6 L2549.7 627.0 L2551.0 623.4 L2552.3 634.7 L2553.6 634.9 L2554.9 634.1 L2556.2 632.1 L2557.5 620.1 L2558.8 641.6 L2560.1 633.7 L2561.4 632.2 L2562.7 634.8 L2564.0 635.9 L2565.3 636.1 L2566.6 633.1 L2567.9 632.4 L2569.2 624.3 L2570.5 620.6 L2571.8 634.1 L2573.1 635.5 L2574.4 636.5 L2575.7 635.3 L2577.0 611.6 L2578.3 646.1 L2579.6 635.8 L2580.9 643.1 L2582.2 622.0 L2583.5 645.8 L2584.8 635.4 L2586.1 634.4 L2587.4 633.7 L2588.7 628.5 L2590.0 634.0 L2591.3 632.6 L2592.6 633.1 L2593.9 628.2 L2595.2 634.7 L2596.5 632.9 L2597.8 621.2 L2599.1 635.5 L2600.4 636.4 L2601.7 632.8 L2603.0 641.4 L2604.3 623.5 L2605.6 634.1 L2606.9 623.8 L2608.2 625.2 L2609.5 633.0 L2610.8 634.2 L2612.1 634.8 L2613.4 635.6 L2614.7 636.1 L2616.0 633.1 L2617.3 636.5 L2618.6 619.9 L2619.9 632.8 L2621.2 647.5 L2622.5 634.0 L2623.8 623.5 L2625.1 632.1 L2626.4 632.0 L2627.7 635.5 L2629.0 633.9 L2630.3 634.8 L2631.6 632.3 L2632.9 633.5 L2634.2 632.7 L2635.5 646.3 L2636.8 631.8 L2638.1 635.0 L2639.4 633.5 L2640.7 633.2 L2642.0 633.0 L2643.3 633.6 L2644.6 634.5 L2645.9 634.0 L2647.2 622.3 L2648.5 635.2 L2649.8 636.0 L2651.1 635.2 L2652.4 632.6 L2653.7 635.2 L2655.0 634.5 L2656.3 631.8 L2657.6 632.9 L2658.9 632.5 L2660.2 632.5 L2661.5 632.7 L2662.8 634.7 L2664.1 632.7 L2665.4 632.0 L2666.7 635.9 L2668.0 625.0 L2669.3 632.3 L2670.6 623.5 L2671.9 632.3 L2673.2 620.4 L2674.5 632.3 L2675.8 634.8 L2677.1 632.5 L2678.4 633.6 L2679.7 635.1 L2681.0 635.0 L2682.3 636.0 L2683.6 627.1 L2684.9 634.7 L2686.2 627.4 L2687.5 643.2 L2688.8 624.0 L2690.1 632.9 L2691.4 633.8 L2692.7 632.2 L2694.0 634.2 L2695.3 631.9 L2696.6 626.3 L2697.9 622.0 L2699.2 636.3 L2700.5 633.7 L2701.8 634.5 L2703.1 633.7 L2704.4 632.0 L2705.7 631.7 L2707.0 634.8 L2708.3 634.0 L2709.6 633.2 L2710.9 636.0 L2712.2 634.1 L2713.5 633.9 L2714.8 635.2 L2716.1 634.0 L2717.4 632.5 L2718.7 636.0 L2720.0 636.4 L2721.3 631.9 L2722.6 633.1 L2723.9 635.9 L2725.2 644.6 L2726.5 636.0 L2727.8 634.5 L2729.1 619.6 L2730.4 636.4 L2731.7 633.3 L2733.0 634.8 L2734.3 633.3 L2735.6 635.8 L2736.9 634.8 L2738.2 634.7 L2739.5 634.7 L2740.8 622.5 L2742.1 632.1 L2743.4 636.4 L2744.7 634.8 L2746.0 633.8 L2747.3 633.4 L2748.6 632.7 L2749.9 633.7 L2751.2 632.4 L2752.5 632.3 L2753.8 633.5 L2755.1 633.3 L2756.4 633.7 L2757.7 634.8 L2759.0 634.3 L2760.3 634.7 L2761.6 648.2 L2762.9 621.7 L2764.2 632.8 L2765.5 633.4 L2766.8 648.4 L2768.1 636.4 L2769.4 635.5 L2770.7 631.7 L2772.0 632.9 L2773.3 621.5 L2774.6 635.0 L2775.9 634.5 L2777.2 636.6 L2778.5 636.1 L2779.8 634.2 L2781.1 633.0 L2782.4 632.1 L2783.7 622.5 L2785.0 631.8 L2786.3 634.9 L2787.6 633.3 L2788.9 649.1 L2790.2 636.3 L2791.5 633.1 L2792.8 655.1 L2794.1 655.1 L2795.4 655.1 L2796.7 655.1 L2798.0 655.1 L2799.3 655.1 L2800.6 655.1 L2801.9 633.0 L2803.2 626.1 L2804.5 634.1 L2805.8 633.2 L2807.1 632.3 L2808.4 633.5 L2809.7 634.3 L2811.0 632.6 L2812.3 635.8 L2813.6 635.5 L2814.9 643.7 L2816.2 633.8 L2817.5 634.4 L2818.8 635.9 L2820.1 633.6 L2821.4 632.0 L2822.7 625.7 L2824.0 632.3 L2825.3 634.4 L2826.6 634.2 L2827.9 632.2 L2829.2 635.6 L2830.5 631.9 L2831.8 634.1 L2833.1 634.2 L2834.4 619.6 L2835.7 635.2 L2837.0 635.6 L2838.3 636.2 L2839.6 634.7 L2840.9 624.7 L2842.2 632.6 L2843.5 631.7 L2844.8 634.2 L2846.1 632.8 L2847.4 633.9 L2848.7 633.1 L2850.0 634.1 L2851.3 634.4 L2852.6 628.4 L2853.9 632.0 L2855.2 633.1 L2856.5 632.9 L2857.8 620.6 L2859.1 648.1 L2860.4 632.6 L2861.7 634.8 L2863.0 633.2 L2864.3 635.2 L2865.6 633.8 L2866.9 633.2 L2868.2 644.9 L2869.5 633.3 L2870.8 648.5 L2872.1 645.4 L2873.4 633.8 L2874.7 634.4 L2876.0 636.5 L2877.3 636.0 L2878.6 633.7 L2879.9 634.4 L2881.2 627.7 L2882.5 634.2 L2883.8 636.1 L2885.1 625.1 L2886.4 634.9 L2887.7 633.2 L2889.0 632.7 L2890.3 633.2 L2891.6 627.8 L2892.9 634.4 L2894.2 633.8 L2895.5 620.0 L2896.8 636.6 L2898.1 631.7 L2899.4 632.6 L2900.7 633.8 L2902.0 631.9 L2903.3 635.5 L2904.6 633.6 L2905.9 618.6 L2907.2 626.7 L2908.5 632.0 L2909.8 634.4 L2911.1 636.2 L2912.4 634.1 L2913.7 632.9 L2915.0 631.7 L2916.3 624.0 L2917.6 633.5 L2918.9 634.5 L2920.2 631.6 L2921.5 636.4 L2922.8 633.5 L2924.1 629.4 L2925.4 628.2 L2926.7 632.5 L2928.0 632.2 L2929.3 633.3 L2930.6 636.2 L2931.9 632.2 L2933.2 634.1 L2934.5 633.5 L2935.8 625.5 L2937.1 635.9 L2938.4 631.7 L2939.7 632.2 L2941.0 623.4 L2942.3 631.7 L2943.6 631.7 L2944.9 626.9 L2946.2 632.5 L2947.5 633.5 L2948.8 620.7 L2950.1 622.6 L2951.4 633.0 L2952.7 635.9 L2954.0 633.0 L2955.3 634.9 L2956.6 635.1 L2957.9 635.9 L2959.2 631.6 L2960.5 632.8 L2961.8 633.5 L2963.1 632.5 L2964.4 631.8 L2965.7 636.6 L2967.0 629.4 L2968.3 633.7 L2969.6 631.7 L2970.9 633.5 L2972.2 633.9 L2973.5 623.3 L2974.8 636.3 L2976.1 634.9 L2977.4 635.5 L2978.7 645.6 L2980.0 635.1 L2981.3 632.6 L2982.6 632.3 L2983.9 625.7 L2985.2 635.0 L2986.5 634.1 L2987.8 633.3 L2989.1 632.4 L2990.4 633.3 L2991.7 633.8 L2993.0 635.0 L2994.3 634.9 L2995.6 632.3 L2996.9 634.6 L2998.2 623.4 L2999.5 632.3 L3000.8 622.3 L3002.1 648.9 L3003.4 633.3 L3004.7 634.0 L3006.0 627.0 L3007.3 636.4 L3008.6 636.2 L3009.9 633.6 L3011.2 635.3 L3012.5 636.0 L3013.8 632.5 L3015.1 626.7 L3016.4 620.0 L3017.7 632.2 L3019.0 632.2 L3020.3 635.8 L3021.6 636.5 L3022.9 631.7 L3024.2 633.3 L3025.5 633.2 L3026.8 632.0 L3028.1 635.3 L3029.4 636.2 L3030.7 632.9 L3032.0 634.4 L3033.3 632.5 L3034.6 625.3 L3035.9 632.2 L3037.2 620.7 L3038.5 636.2 L3039.8 645.7 L3041.1 632.3 L3042.4 627.0 L3043.7 636.3 L3045.0 636.2 L3046.3 632.3 L3047.6 627.3 L3048.9 635.0 L3050.2 634.4 L3051.5 635.3 L3051.5 657.6 Z" fill="#ececec"/><rect x="2711.0" y="600" width="2" height="60" fill="#175e62"/><rect x="2754.8" y="600" width="2" height="60" fill="#175e62"/><rect x="2767.8" y="600" width="2" height="60" fill="#175e62"/><rect x="2863.5" y="600" width="2" height="60" fill="#175e62"/><rect x="2887.4" y="600" width="2" height="60" fill="#175e62"/><rect x="2909.0" y="600" width="2" height="60" fill="#175e62"/><rect x="2919.0" y="600" width="2" height="60" fill="#175e62"/><rect x="2979.8" y="600" width="2" height="60" fill="#175e62"/></svg>
<div class="a" style="left:829.0px;top:407.0px;width:579.0px;height:270.0px;border:3px solid #1a63e8;"></div>
<div class="a" style="left:1350.0px;top:432.0px;width:32.0px;height:32.0px;background:#fff;border-radius:3px;border:1px solid #ccc;"></div>
<svg class="a" style="left:1362.0px;top:437.0px;" width="8" height="22" viewBox="0 0 8 22"><circle cx="4" cy="3" r="2.2" fill="#333"/><circle cx="4" cy="11" r="2.2" fill="#333"/><circle cx="4" cy="19" r="2.2" fill="#333"/></svg>
<div class="a" style="left:831.0px;top:685.0px;width:706.0px;height:717.0px;border-radius:31px;background:#fbfbfb;border:2px solid #bfbfbf;"></div>
<div class="t" style="left:874.6px;top:720.8px;font-size:31.0px;line-height:31.0px;color:#2b2b2b;font-weight:700;transform: scaleX(0.9481);transform-origin:0 0;">Channel Profit Bar</div>
<svg class="a" style="left:0;top:0" width="3838" height="1420"><defs><linearGradient id="bg1" x1="0" x2="1" y1="0" y2="0"><stop offset="0" stop-color="#f7845a"/><stop offset="1" stop-color="#fdd565"/></linearGradient></defs><line x1="1068.6" y1="771" x2="1068.6" y2="1288" stroke="#8c8c8c" stroke-width="1.6" stroke-dasharray="5 4"/><line x1="1131.0" y1="771" x2="1131.0" y2="1288" stroke="#8c8c8c" stroke-width="1.6" stroke-dasharray="5 4"/><line x1="1193.0" y1="771" x2="1193.0" y2="1288" stroke="#8c8c8c" stroke-width="1.6" stroke-dasharray="5 4"/><line x1="1255.0" y1="771" x2="1255.0" y2="1288" stroke="#8c8c8c" stroke-width="1.6" stroke-dasharray="5 4"/><line x1="1315.0" y1="771" x2="1315.0" y2="1288" stroke="#8c8c8c" stroke-width="1.6" stroke-dasharray="5 4"/><line x1="1377.0" y1="771" x2="1377.0" y2="1288" stroke="#8c8c8c" stroke-width="1.6" stroke-dasharray="5 4"/><line x1="1439.0" y1="771" x2="1439.0" y2="1288" stroke="#8c8c8c" stroke-width="1.6" stroke-dasharray="5 4"/><rect x="1006.6" y="798.5" width="466.4" height="15" fill="url(#bg1)" fill-opacity="0.88" stroke="#e6e6e6" stroke-width="2"/><rect x="1007.6" y="798.5" width="465.4" height="1.3" fill="#a8a8a8"/><rect x="1006.6" y="844.6" width="331.8" height="15" fill="url(#bg1)" fill-opacity="0.88" stroke="#e6e6e6" stroke-width="2"/><rect x="1007.6" y="844.6" width="330.8" height="1.3" fill="#a8a8a8"/><rect x="1006.6" y="888.6" width="70.4" height="15" fill="url(#bg1)" fill-opacity="0.88" stroke="#e6e6e6" stroke-width="2"/><rect x="1007.6" y="888.6" width="69.4" height="1.3" fill="#a8a8a8"/><rect x="1006.6" y="932.6" width="42.4" height="15" fill="url(#bg1)" fill-opacity="0.88" stroke="#e6e6e6" stroke-width="2"/><rect x="1007.6" y="932.6" width="41.4" height="1.3" fill="#a8a8a8"/><rect x="1006.6" y="978.2" width="22.8" height="15" fill="url(#bg1)" fill-opacity="0.88" stroke="#e6e6e6" stroke-width="2"/><rect x="1007.6" y="978.2" width="21.8" height="1.3" fill="#a8a8a8"/><rect x="1006.6" y="1022.7" width="16.4" height="15" fill="url(#bg1)" fill-opacity="0.88" stroke="#e6e6e6" stroke-width="2"/><rect x="1007.6" y="1022.7" width="15.4" height="1.3" fill="#a8a8a8"/><rect x="1006.6" y="1066.7" width="4.8" height="15" fill="url(#bg1)" fill-opacity="0.88" stroke="#e6e6e6" stroke-width="2"/><rect x="1007.6" y="1066.7" width="3.8" height="1.3" fill="#a8a8a8"/><rect x="1006.6" y="1111.3" width="4" height="17" fill="#e2e2e2"/><rect x="1006.6" y="1155.3" width="4" height="17" fill="#e2e2e2"/><rect x="1006.6" y="1199.3" width="4" height="17" fill="#e2e2e2"/><rect x="1006.6" y="1245.4" width="4" height="17" fill="#e2e2e2"/></svg>
<div class="t" style="left:992.8px;top:790.2px;font-size:24.0px;line-height:24.0px;color:#333;transform:translateX(-100%) scaleX(1.0188);transform-origin:100% 0;">Retail</div>
<div class="t" style="left:992.8px;top:836.3px;font-size:24.0px;line-height:24.0px;color:#333;transform:translateX(-100%) scaleX(1.0252);transform-origin:100% 0;">Retail Chain</div>
<div class="t" style="left:992.8px;top:880.3px;font-size:24.0px;line-height:24.0px;color:#333;transform:translateX(-100%) scaleX(1.0449);transform-origin:100% 0;">Supplier</div>
<div class="t" style="left:992.8px;top:924.3px;font-size:24.0px;line-height:24.0px;color:#333;transform:translateX(-100%) scaleX(1.0836);transform-origin:100% 0;">Distributors</div>
<div class="t" style="left:992.8px;top:969.9px;font-size:24.0px;line-height:24.0px;color:#333;transform:translateX(-100%) scaleX(1.0061);transform-origin:100% 0;">Franchisees</div>
<div class="t" style="left:992.8px;top:1014.4px;font-size:24.0px;line-height:24.0px;color:#333;transform:translateX(-100%) scaleX(1.0594);transform-origin:100% 0;">Other</div>
<div class="t" style="left:992.8px;top:1058.4px;font-size:24.0px;line-height:24.0px;color:#333;transform:translateX(-100%) scaleX(1.0794);transform-origin:100% 0;">Internal</div>
<div class="t" style="left:992.8px;top:1104.0px;font-size:24.0px;line-height:24.0px;color:#333;transform:translateX(-100%) scaleX(1.0306);transform-origin:100% 0;">Education</div>
<div class="t" style="left:992.8px;top:1148.0px;font-size:24.0px;line-height:24.0px;color:#333;transform:translateX(-100%) scaleX(1.0500);transform-origin:100% 0;">New</div>
<div class="t" style="left:992.8px;top:1192.0px;font-size:24.0px;line-height:24.0px;color:#333;transform:translateX(-100%) scaleX(1.0652);transform-origin:100% 0;">Virtual</div>
<div class="t" style="left:992.8px;top:1238.1px;font-size:24.0px;line-height:24.0px;color:#333;transform:translateX(-100%) scaleX(1.0635);transform-origin:100% 0;">Affiliates</div>
<div class="t" style="left:1069.6px;top:1376.3px;font-size:24px;line-height:24px;color:#333;transform-origin:0 0;transform:rotate(-90deg) translateY(-12px) scaleX(0.970)">$200K</div>
<div class="t" style="left:1132.0px;top:1376.3px;font-size:24px;line-height:24px;color:#333;transform-origin:0 0;transform:rotate(-90deg) translateY(-12px) scaleX(0.970)">$400K</div>
<div class="t" style="left:1194.0px;top:1376.3px;font-size:24px;line-height:24px;color:#333;transform-origin:0 0;transform:rotate(-90deg) translateY(-12px) scaleX(0.970)">$600K</div>
<div class="t" style="left:1256.0px;top:1376.3px;font-size:24px;line-height:24px;color:#333;transform-origin:0 0;transform:rotate(-90deg) translateY(-12px) scaleX(0.970)">$800K</div>
<div class="t" style="left:1316.0px;top:1356.0px;font-size:24px;line-height:24px;color:#333;transform-origin:0 0;transform:rotate(-90deg) translateY(-12px) scaleX(1.007)">$1M</div>
<div class="t" style="left:1378.0px;top:1374.7px;font-size:24px;line-height:24px;color:#333;transform-origin:0 0;transform:rotate(-90deg) translateY(-12px) scaleX(0.985)">$1.2M</div>
<div class="t" style="left:1440.0px;top:1374.7px;font-size:24px;line-height:24px;color:#333;transform-origin:0 0;transform:rotate(-90deg) translateY(-12px) scaleX(0.985)">$1.4M</div>
<div class="a" style="left:1547.0px;top:685.0px;width:755.0px;height:717.0px;border-radius:31px;background:#fbfbfb;border:2px solid #bfbfbf;"></div>
<div class="t" style="left:1590.0px;top:720.8px;font-size:31.0px;line-height:31.0px;color:#2b2b2b;font-weight:700;transform: scaleX(0.9214);transform-origin:0 0;">Category Sales Grid</div>
<div class="t" style="left:1592.0px;top:788.1px;font-size:22.0px;line-height:22.0px;color:#333;font-weight:700;transform: scaleX(0.9243);transform-origin:0 0;">MAIN CATEGORY</div>
<div class="t" style="left:1844.7px;top:788.1px;font-size:22.0px;line-height:22.0px;color:#333;font-weight:700;transform: scaleX(0.9919);transform-origin:0 0;">MONTH</div>
<div class="t" style="left:2119.7px;top:788.1px;font-size:22.0px;line-height:22.0px;color:#333;font-weight:700;transform:translateX(-100%) scaleX(0.8235);transform-origin:100% 0;">SALES</div>
<div class="t" style="left:2255.3px;top:788.1px;font-size:22.0px;line-height:22.0px;color:#333;font-weight:700;transform:translateX(-100%) scaleX(0.9318);transform-origin:100% 0;">UNITS</div>
<div class="a" style="left:1564.0px;top:823.5px;width:720.0px;height:2.5px;background:#8e8e8e;"></div>
<div class="t" style="left:1592.0px;top:843.2px;font-size:22.0px;line-height:22.0px;color:#333;transform: scaleX(0.8983);transform-origin:0 0;">Rollie?""""</div>
<div class="t" style="left:1844.7px;top:843.2px;font-size:22.0px;line-height:22.0px;color:#333;transform: scaleX(0.9700);transform-origin:0 0;">2022 Feb</div>
<div class="t" style="left:2119.7px;top:843.2px;font-size:22.0px;line-height:22.0px;color:#333;transform:translateX(-100%) scaleX(0.9750);transform-origin:100% 0;">$177</div>
<div class="t" style="left:2255.3px;top:843.2px;font-size:22.0px;line-height:22.0px;color:#333;transform:translateX(-100%) scaleX(0.9750);transform-origin:100% 0;">1</div>
<div class="t" style="left:1592.0px;top:900.5px;font-size:22.0px;line-height:22.0px;color:#333;transform: scaleX(0.9405);transform-origin:0 0;">&Atilde;,&sup3;&atilde;&fnof;&yuml;&atilde;&fnof;&fnof;&atilde;,&macr;</div>
<div class="t" style="left:1844.7px;top:900.5px;font-size:22.0px;line-height:22.0px;color:#333;transform: scaleX(0.9700);transform-origin:0 0;">2022 Jul</div>
<div class="t" style="left:2119.7px;top:900.5px;font-size:22.0px;line-height:22.0px;color:#333;transform:translateX(-100%) scaleX(0.9750);transform-origin:100% 0;">$17</div>
<div class="t" style="left:2255.3px;top:900.5px;font-size:22.0px;line-height:22.0px;color:#333;transform:translateX(-100%) scaleX(0.9750);transform-origin:100% 0;">1</div>
<div class="t" style="left:1844.7px;top:957.7px;font-size:22.0px;line-height:22.0px;color:#333;transform: scaleX(0.9700);transform-origin:0 0;">2022 Mar</div>
<div class="t" style="left:2119.7px;top:957.7px;font-size:22.0px;line-height:22.0px;color:#333;transform:translateX(-100%) scaleX(0.9750);transform-origin:100% 0;">$43</div>
<div class="t" style="left:2255.3px;top:957.7px;font-size:22.0px;line-height:22.0px;color:#333;transform:translateX(-100%) scaleX(0.9750);transform-origin:100% 0;">14</div>
<div class="t" style="left:1592.0px;top:1014.9px;font-size:22.0px;line-height:22.0px;color:#333;transform: scaleX(0.9655);transform-origin:0 0;">Accessories</div>
<div class="t" style="left:1844.7px;top:1014.9px;font-size:22.0px;line-height:22.0px;color:#333;transform: scaleX(0.9700);transform-origin:0 0;">2022 Apr</div>
<div class="t" style="left:2119.7px;top:1014.9px;font-size:22.0px;line-height:22.0px;color:#333;transform:translateX(-100%) scaleX(0.9750);transform-origin:100% 0;">$120,290</div>
<div class="t" style="left:2255.3px;top:1014.9px;font-size:22.0px;line-height:22.0px;color:#333;transform:translateX(-100%) scaleX(0.9750);transform-origin:100% 0;">4,163</div>
<div class="t" style="left:1844.7px;top:1072.7px;font-size:22.0px;line-height:22.0px;color:#333;transform: scaleX(0.9700);transform-origin:0 0;">2022 Aug</div>
<div class="t" style="left:2119.7px;top:1072.7px;font-size:22.0px;line-height:22.0px;color:#333;transform:translateX(-100%) scaleX(0.9750);transform-origin:100% 0;">$139,004</div>
<div class="t" style="left:2255.3px;top:1072.7px;font-size:22.0px;line-height:22.0px;color:#333;transform:translateX(-100%) scaleX(0.9750);transform-origin:100% 0;">3,747</div>
<div class="t" style="left:1844.7px;top:1129.9px;font-size:22.0px;line-height:22.0px;color:#333;transform: scaleX(0.9700);transform-origin:0 0;">2022 Feb</div>
<div class="t" style="left:2119.7px;top:1129.9px;font-size:22.0px;line-height:22.0px;color:#333;transform:translateX(-100%) scaleX(0.9750);transform-origin:100% 0;">$112,415</div>
<div class="t" style="left:2255.3px;top:1129.9px;font-size:22.0px;line-height:22.0px;color:#333;transform:translateX(-100%) scaleX(0.9750);transform-origin:100% 0;">2,882</div>
<div class="t" style="left:1844.7px;top:1187.7px;font-size:22.0px;line-height:22.0px;color:#333;transform: scaleX(0.9700);transform-origin:0 0;">2022 Jan</div>
<div class="t" style="left:2119.7px;top:1187.7px;font-size:22.0px;line-height:22.0px;color:#333;transform:translateX(-100%) scaleX(0.9750);transform-origin:100% 0;">$124,549</div>
<div class="t" style="left:2255.3px;top:1187.7px;font-size:22.0px;line-height:22.0px;color:#333;transform:translateX(-100%) scaleX(0.9750);transform-origin:100% 0;">3,253</div>
<div class="t" style="left:1844.7px;top:1244.9px;font-size:22.0px;line-height:22.0px;color:#333;transform: scaleX(0.9700);transform-origin:0 0;">2022 Jul</div>
<div class="t" style="left:2119.7px;top:1244.9px;font-size:22.0px;line-height:22.0px;color:#333;transform:translateX(-100%) scaleX(0.9750);transform-origin:100% 0;">$150,746</div>
<div class="t" style="left:2255.3px;top:1244.9px;font-size:22.0px;line-height:22.0px;color:#333;transform:translateX(-100%) scaleX(0.9750);transform-origin:100% 0;">4,999</div>
<div class="t" style="left:1844.7px;top:1302.1px;font-size:22.0px;line-height:22.0px;color:#333;transform: scaleX(0.9700);transform-origin:0 0;">2022 Jun</div>
<div class="t" style="left:2119.7px;top:1302.1px;font-size:22.0px;line-height:22.0px;color:#333;transform:translateX(-100%) scaleX(0.9750);transform-origin:100% 0;">$151,616</div>
<div class="t" style="left:2255.3px;top:1302.1px;font-size:22.0px;line-height:22.0px;color:#333;transform:translateX(-100%) scaleX(0.9750);transform-origin:100% 0;">2,959</div>
<div class="t" style="left:1844.7px;top:1359.9px;font-size:22.0px;line-height:22.0px;color:#333;transform: scaleX(0.9700);transform-origin:0 0;">2022 Mar</div>
<div class="t" style="left:2119.7px;top:1359.9px;font-size:22.0px;line-height:22.0px;color:#333;transform:translateX(-100%) scaleX(0.9750);transform-origin:100% 0;">$143,523</div>
<div class="t" style="left:2255.3px;top:1359.9px;font-size:22.0px;line-height:22.0px;color:#333;transform:translateX(-100%) scaleX(0.9750);transform-origin:100% 0;">3,673</div>
<div class="a" style="left:1564.0px;top:882.0px;width:420.0px;height:2.0px;background:#e3e3e3;"></div>
<div class="a" style="left:1816.0px;top:938.7px;width:168.0px;height:2.0px;background:#e3e3e3;"></div>
<div class="a" style="left:1564.0px;top:996.0px;width:420.0px;height:2.0px;background:#e3e3e3;"></div>
<div class="a" style="left:1816.0px;top:1053.7px;width:168.0px;height:2.0px;background:#e3e3e3;"></div>
<div class="a" style="left:1816.0px;top:1110.4px;width:168.0px;height:2.0px;background:#e3e3e3;"></div>
<div class="a" style="left:1816.0px;top:1168.0px;width:168.0px;height:2.0px;background:#e3e3e3;"></div>
<div class="a" style="left:1816.0px;top:1225.4px;width:168.0px;height:2.0px;background:#e3e3e3;"></div>
<div class="a" style="left:1816.0px;top:1283.7px;width:168.0px;height:2.0px;background:#e3e3e3;"></div>
<div class="a" style="left:1816.0px;top:1341.0px;width:168.0px;height:2.0px;background:#e3e3e3;"></div>
<div class="a" style="left:2311.0px;top:685.0px;width:758.0px;height:717.0px;border-radius:31px;background:#e8e9eb;border:2px solid #bfbfbf;"></div>
<div class="t" style="left:2354.6px;top:720.8px;font-size:31.0px;line-height:31.0px;color:#1f1f1f;font-weight:700;">Country Profit Map</div>
<svg class="a" style="left:2328.0px;top:768.6px;" width="724" height="615" viewBox="0 0 724 615"><defs><clipPath id="mclip"><rect x="0" y="0" width="724" height="615"/></clipPath></defs><g clip-path="url(#mclip)"><rect x="0" y="0" width="724" height="615" fill="#d7d9dd"/><path d="M-206.8 110.9 L-189.6 78.4 L-172.3 68.8 L-129.1 82.6 L-91.6 78.4 L-60.0 89.1 L-34.0 92.3 L-5.2 97.7 L6.3 66.9 L20.7 92.3 L40.8 105.1 L29.3 123.2 L17.8 127.8 L6.3 143.3 L4.8 157.6 L12.0 165.6 L32.2 174.9 L40.0 186.7 L46.6 194.2 L49.5 192.8 L50.1 178.4 L55.2 160.3 L52.4 140.3 L68.2 137.2 L76.8 152.0 L89.8 147.9 L99.0 168.3 L112.8 190.5 L105.6 197.4 L86.9 199.6 L91.2 206.3 L89.8 212.7 L101.3 218.9 L86.9 227.0 L75.4 232.9 L63.9 238.6 L58.1 249.8 L58.1 258.7 L43.7 270.7 L46.6 285.6 L45.2 291.4 L39.4 284.0 L35.1 275.8 L20.7 275.1 L6.3 277.4 L-3.8 285.6 L-3.8 301.4 L3.4 311.9 L14.9 311.6 L16.4 304.5 L26.4 303.0 L23.6 319.7 L36.5 322.7 L36.5 334.5 L48.0 338.9 L53.8 341.8 L52.4 346.2 L46.6 344.7 L32.2 337.5 L25.0 328.6 L12.0 324.2 L0.5 320.6 L-25.4 309.1 L-28.3 298.3 L-45.6 280.7 L-60.0 267.3 L-71.5 260.4 L-80.1 240.5 L-81.6 208.4 L-97.4 178.4 L-126.2 149.1 L-155.0 143.3 L-178.0 165.6 L-201.1 146.2 Z" fill="#f3f3f3" stroke="#c9cbcf" stroke-width="1"/><path d="M32.2 301.7 L40.8 298.0 L55.2 303.0 L63.3 307.0 L53.8 307.9 L43.7 302.7 L33.6 303.0 Z" fill="#f3f3f3" stroke="#c9cbcf" stroke-width="1"/><path d="M62.4 312.5 L68.2 307.9 L79.7 311.3 L79.7 313.1 L72.5 314.9 L62.7 313.4 Z" fill="#f3f3f3" stroke="#c9cbcf" stroke-width="1"/><path d="M53.8 341.8 L59.6 335.1 L71.1 330.4 L81.2 335.7 L98.4 335.4 L104.2 341.8 L112.8 349.1 L127.2 352.0 L133.0 361.2 L137.3 369.3 L150.3 373.6 L164.7 376.5 L176.2 382.3 L176.2 392.4 L166.1 404.2 L164.7 417.6 L158.9 431.4 L147.4 436.1 L137.3 444.0 L137.3 452.1 L124.4 468.9 L111.4 474.1 L112.8 484.9 L98.4 488.5 L89.8 496.1 L89.8 511.8 L82.6 518.0 L87.5 524.4 L78.3 540.0 L79.7 544.7 L72.5 551.9 L62.4 542.3 L59.6 520.1 L65.3 503.8 L65.3 481.2 L71.1 457.0 L74.0 420.6 L58.1 407.1 L43.7 383.7 L45.7 376.2 L43.7 369.3 L46.6 363.5 L50.9 359.2 L53.8 353.4 L53.8 346.2 Z" fill="#f3f3f3" stroke="#c9cbcf" stroke-width="1"/><path d="M249.6 227.0 L251.1 245.0 L251.4 251.6 L259.7 254.4 L271.2 252.3 L277.0 244.3 L286.2 232.9 L294.3 228.2 L302.9 223.8 L307.2 225.0 L312.4 234.0 L321.9 240.5 L321.9 247.2 L326.0 243.5 L330.3 239.8 L323.1 234.8 L317.9 231.7 L312.4 223.0 L316.7 218.1 L320.2 221.0 L333.2 234.8 L337.5 247.9 L344.7 248.3 L351.9 237.5 L360.5 236.7 L380.7 252.3 L379.2 263.9 L375.8 271.7 L370.6 272.1 L377.5 277.4 L389.3 301.4 L399.4 322.7 L402.3 329.5 L406.6 328.6 L426.8 318.2 L436.8 313.7 L445.5 304.5 L449.2 299.9 L439.1 287.9 L425.3 294.5 L421.0 287.2 L415.2 277.4 L421.0 275.8 L438.3 285.6 L454.1 291.4 L468.5 290.7 L474.3 296.7 L478.6 304.5 L487.2 316.7 L491.6 327.2 L498.8 343.0 L507.4 336.6 L508.0 321.2 L527.6 305.4 L539.1 299.9 L542.8 305.4 L549.2 319.7 L557.8 318.2 L560.7 328.6 L561.3 341.8 L565.9 350.5 L568.7 358.3 L575.1 362.7 L574.8 352.6 L571.3 348.5 L566.4 343.3 L565.0 327.5 L572.2 331.6 L579.4 341.2 L583.7 336.3 L591.5 332.8 L590.9 321.8 L583.7 312.2 L582.3 305.1 L589.5 302.7 L603.9 300.8 L614.0 296.7 L622.6 287.2 L628.4 275.8 L625.5 269.0 L622.6 260.4 L620.3 258.7 L629.8 251.6 L625.5 248.7 L616.8 247.9 L621.2 241.3 L626.9 237.5 L628.4 244.3 L637.0 241.6 L641.3 248.7 L641.3 260.4 L649.4 258.0 L650.0 251.6 L645.6 246.1 L644.2 241.3 L650.5 236.7 L653.4 231.7 L657.2 228.2 L667.2 226.2 L675.9 213.5 L681.6 206.3 L681.6 192.8 L683.9 184.3 L673.0 180.9 L665.8 177.5 L673.0 168.3 L686.0 154.8 L706.1 152.0 L720.5 153.7 L726.3 140.3 L737.8 143.3 L766.6 149.1 L795.4 117.8 L795.4 88.3 L737.8 80.1 L709.0 66.9 L680.2 57.6 L651.4 71.4 L637.0 47.8 L602.4 44.7 L593.8 11.8 L576.5 -1.2 L559.2 20.3 L530.4 26.2 L507.4 47.8 L490.1 54.7 L475.7 52.8 L467.1 84.2 L449.8 81.7 L435.4 92.3 L403.7 92.3 L395.1 107.3 L374.9 85.9 L354.8 71.4 L334.6 81.7 L320.2 94.6 L313.0 114.4 L305.8 127.8 L291.4 137.2 L292.8 157.6 L300.0 160.3 L307.2 153.7 L313.0 169.3 L317.9 173.9 L324.5 165.6 L331.7 150.3 L327.4 134.1 L338.9 114.4 L347.6 113.0 L338.9 131.0 L338.9 143.3 L343.2 149.1 L363.4 147.9 L357.6 152.0 L344.7 153.7 L346.1 164.6 L337.5 166.7 L337.5 174.4 L318.8 180.9 L308.7 180.9 L305.8 176.0 L301.5 164.1 L300.0 173.4 L302.1 181.4 L291.4 184.8 L287.1 192.8 L281.6 195.6 L272.7 201.4 L264.0 206.3 L273.5 216.9 L271.8 227.4 Z" fill="#f3f3f3" stroke="#c9cbcf" stroke-width="1"/><path d="M370.6 272.1 L374.9 283.0 L379.2 296.7 L384.4 312.2 L390.8 321.2 L401.7 333.1 L424.5 332.2 L423.9 336.0 L413.8 353.4 L398.0 369.3 L392.2 375.0 L389.9 386.6 L393.6 398.3 L393.9 410.1 L377.8 425.2 L379.2 437.6 L371.5 444.0 L370.6 452.1 L363.4 462.1 L350.7 470.6 L334.6 473.4 L330.0 470.6 L328.3 463.8 L318.8 432.9 L311.0 416.1 L315.9 399.7 L312.1 383.7 L303.8 372.2 L305.2 358.3 L304.4 354.9 L294.3 354.0 L290.0 348.2 L281.3 348.8 L271.2 352.6 L255.4 353.7 L243.9 346.5 L233.8 334.5 L226.6 323.6 L229.5 309.1 L228.0 304.5 L239.6 283.0 L248.8 277.4 L249.4 267.3 L260.0 255.9 L271.2 258.3 L285.6 252.3 L305.8 250.8 L308.7 256.9 L306.7 262.9 L311.6 265.6 L321.6 268.0 L334.6 272.8 L334.6 267.3 L343.2 267.0 L349.0 270.4 L360.5 272.8 Z" fill="#f3f3f3" stroke="#c9cbcf" stroke-width="1"/><path d="M419.0 401.2 L422.4 411.6 L419.6 419.1 L412.9 440.8 L406.6 441.7 L402.3 431.4 L404.9 414.0 L412.4 408.6 Z" fill="#f3f3f3" stroke="#c9cbcf" stroke-width="1"/><path d="M313.0 247.6 L321.9 246.8 L320.5 252.6 Z" fill="#f3f3f3" stroke="#c9cbcf" stroke-width="1"/><path d="M260.6 199.6 L281.0 194.2 L281.9 187.2 L277.0 183.3 L272.7 176.0 L271.2 169.8 L271.8 162.5 L266.9 157.0 L262.6 157.0 L259.1 168.3 L262.6 177.0 L267.8 179.9 L268.4 184.3 L263.5 186.7 L262.0 191.9 L268.4 192.8 Z" fill="#f3f3f3" stroke="#c9cbcf" stroke-width="1"/><path d="M248.2 192.3 L259.7 190.5 L259.7 178.4 L255.4 174.4 L248.2 179.9 Z" fill="#f3f3f3" stroke="#c9cbcf" stroke-width="1"/><path d="M207.9 114.4 L213.6 108.0 L233.8 107.3 L238.1 117.8 L225.2 128.4 L212.2 125.8 Z" fill="#f3f3f3" stroke="#c9cbcf" stroke-width="1"/><path d="M654.0 262.2 L665.8 260.4 L671.0 261.1 L680.2 258.7 L683.1 247.9 L684.5 235.6 L680.2 237.9 L679.6 246.1 L671.0 250.8 L660.0 256.9 L654.3 260.4 Z" fill="#f3f3f3" stroke="#c9cbcf" stroke-width="1"/><path d="M650.8 264.6 L656.6 265.6 L654.3 271.4 L652.0 271.4 Z" fill="#f3f3f3" stroke="#c9cbcf" stroke-width="1"/><path d="M680.2 234.8 L684.5 219.3 L696.0 227.4 L690.3 232.9 L681.6 229.0 Z" fill="#f3f3f3" stroke="#c9cbcf" stroke-width="1"/><path d="M686.0 216.9 L690.3 204.1 L688.0 179.4 L686.0 195.1 Z" fill="#f3f3f3" stroke="#c9cbcf" stroke-width="1"/><path d="M623.2 299.6 L628.1 291.7 L625.5 292.0 L622.9 295.8 Z" fill="#f3f3f3" stroke="#c9cbcf" stroke-width="1"/><path d="M622.6 312.2 L628.9 312.2 L634.1 328.6 L626.9 326.3 L624.3 324.2 Z" fill="#f3f3f3" stroke="#c9cbcf" stroke-width="1"/><path d="M628.4 346.2 L638.4 338.0 L641.3 344.7 L637.9 350.0 L628.9 345.6 Z" fill="#f3f3f3" stroke="#c9cbcf" stroke-width="1"/><path d="M590.9 362.1 L602.4 357.2 L613.7 346.2 L619.7 352.0 L616.8 363.5 L615.4 369.3 L612.5 377.4 L606.8 377.9 L595.2 375.0 L590.9 367.8 Z" fill="#f3f3f3" stroke="#c9cbcf" stroke-width="1"/><path d="M551.5 350.2 L557.8 351.4 L566.4 360.6 L578.0 370.7 L582.3 375.6 L581.7 383.1 L576.5 380.8 L567.9 373.6 L561.5 361.2 Z" fill="#f3f3f3" stroke="#c9cbcf" stroke-width="1"/><path d="M580.0 386.0 L588.0 383.7 L596.7 385.2 L606.8 388.6 L606.8 391.6 L593.8 389.8 L582.3 387.8 Z" fill="#f3f3f3" stroke="#c9cbcf" stroke-width="1"/><path d="M619.7 382.3 L621.2 366.4 L625.5 362.9 L637.0 362.1 L624.0 365.0 L626.9 369.3 L632.7 369.3 L625.5 372.2 L629.8 379.4 L625.5 382.3 Z" fill="#f3f3f3" stroke="#c9cbcf" stroke-width="1"/><path d="M654.3 369.9 L662.9 368.7 L673.0 370.7 L683.1 373.9 L696.0 379.4 L703.2 389.5 L710.4 396.8 L700.4 395.3 L690.3 392.4 L683.1 393.0 L675.9 390.4 L673.0 380.8 L660.0 377.9 L657.2 374.5 Z" fill="#f3f3f3" stroke="#c9cbcf" stroke-width="1"/><path d="M603.9 431.4 L605.3 445.6 L608.2 470.6 L616.8 474.1 L632.7 470.3 L654.3 462.1 L667.5 473.8 L674.4 476.2 L680.2 484.5 L698.3 488.5 L709.0 483.0 L717.6 460.4 L719.1 447.2 L710.4 432.9 L697.5 420.6 L695.5 408.6 L687.4 397.4 L684.5 404.2 L684.5 416.1 L680.2 418.2 L669.3 411.6 L671.6 401.2 L658.6 399.2 L651.4 404.2 L650.0 410.1 L639.9 407.1 L629.8 416.1 L625.5 423.7 L614.0 427.4 Z" fill="#f3f3f3" stroke="#c9cbcf" stroke-width="1"/><path d="M693.4 494.9 L704.1 495.7 L703.2 504.6 L697.5 506.2 Z" fill="#f3f3f3" stroke="#c9cbcf" stroke-width="1"/><path d="M506.8 343.3 L507.4 338.0 L512.9 344.7 L510.3 349.1 Z" fill="#f3f3f3" stroke="#c9cbcf" stroke-width="1"/><path d="M589.8 310.0 L595.2 307.3 L596.7 308.8 L592.4 313.1 Z" fill="#f3f3f3" stroke="#c9cbcf" stroke-width="1"/><path d="M0.0 -0.6 L54.1 -0.6 L49.2 7.6 L55.7 19.1 L45.9 40.4 L57.4 50.2 L65.6 65.0 L82.0 76.5 L85.3 91.2 L101.7 107.6 L91.8 140.4 L77.1 142.0 L91.8 150.2 L101.7 171.6 L118.1 189.6 L124.6 212.5 L0.0 212.5 Z" fill="#f3f3f3"/><path d="M72.1 -2.2 L72.1 -0.6 L77.1 9.2 L82.0 20.7 L95.1 19.1 L108.2 27.3 L114.8 38.8 L118.1 53.5 L121.3 68.3 L129.5 76.5 L123.0 87.9 L124.6 104.3 L124.6 117.5 L131.2 130.6 L139.4 145.3 L152.5 151.1 L155.8 135.5 L162.3 115.8 L173.8 107.6 L182.0 97.8 L200.0 91.2 L213.1 81.4 L201.7 78.1 L213.1 68.3 L206.6 56.8 L214.8 46.9 L208.2 40.4 L218.1 32.2 L224.6 19.1 L214.8 14.2 L226.3 -0.6 L226.3 -2.2 Z" fill="#f3f3f3" stroke="#c9cbcf" stroke-width="1"/><path d="M353.0 75.4 L388.0 97.4 L448.0 93.4 L474.0 48.4 L489.0 58.4 L504.0 38.4 L524.0 17.4 L554.0 2.4 L599.0 -0.6 L604.0 22.4 L634.0 38.4 L674.0 22.4 L725.0 17.4 L725.0 151.4 L353.0 151.4 Z" fill="#f3f3f3"/><path d="M423.7 73.1 L438.8 43.0 L463.8 12.9 L473.9 2.8 L453.8 2.8 L428.7 32.9 L418.7 63.1 Z" fill="#f3f3f3" stroke="#c9cbcf" stroke-width="1"/><path d="M6.6 147.0 L16.4 130.6 L32.8 124.0 L54.1 135.5 L49.2 156.8 L59.0 169.9 L54.1 191.2 L44.3 194.5 L32.8 176.5 L11.5 163.4 Z" fill="#d7d9dd" stroke="#c9cbcf" stroke-width="1"/><path d="M32.8 84.7 L45.9 87.9 L70.5 106.0 L68.9 117.5 L91.8 128.9 L91.8 140.4 L77.1 142.0 L54.1 138.8 L41.0 120.7 L45.9 104.3 Z" fill="#d7d9dd" stroke="#c9cbcf" stroke-width="1"/><path d="M78.7 147.0 L91.8 143.7 L93.5 158.4 L82.0 156.8 Z" fill="#d7d9dd" stroke="#c9cbcf" stroke-width="1"/><path d="M78.7 209.3 L91.8 199.4 L111.5 196.2 L124.6 212.5 L104.9 217.5 L91.8 212.5 Z" fill="#d7d9dd" stroke="#c9cbcf" stroke-width="1"/><path d="M0.0 15.8 L19.7 17.1 L55.7 17.8 L54.9 20.4 L19.7 19.4 L0.0 18.7 Z" fill="#d7d9dd" stroke="#c9cbcf" stroke-width="1"/><path d="M0.0 41.7 L21.3 44.0 L49.2 40.7 L48.4 45.0 L21.3 46.9 L0.0 45.3 Z" fill="#d7d9dd" stroke="#c9cbcf" stroke-width="1"/><path d="M9.8 51.9 L14.8 55.1 L17.2 74.8 L23.0 96.1 L18.0 101.1 L12.3 87.9 L9.0 68.3 Z" fill="#d7d9dd" stroke="#c9cbcf" stroke-width="1"/><path d="M0.0 106.0 L6.6 97.8 L9.8 114.2 L3.3 124.0 L0.0 120.7 Z" fill="#d7d9dd" stroke="#c9cbcf" stroke-width="1"/><path d="M357.6 235.6 L357.6 227.0 L362.5 219.7 L372.0 216.9 L377.8 219.7 L385.0 212.7 L390.8 212.7 L386.4 221.0 L397.1 234.0 L380.7 234.0 L366.3 236.0 Z" fill="#d7d9dd"/><path d="M412.4 223.0 L419.6 214.8 L429.6 213.5 L429.6 232.9 L432.5 246.1 L431.9 251.6 L421.9 250.1 L418.1 246.1 L419.6 238.6 L413.8 230.9 Z" fill="#d7d9dd"/><path d="M328.8 170.9 L337.5 163.0 L340.4 152.0 L334.6 146.2 L328.8 160.3 Z" fill="#d7d9dd"/><circle cx="3.8" cy="240.7" r="19.5" fill="#27a866" fill-opacity="0.93" stroke="#fff" stroke-opacity="0.85" stroke-width="1.6"/><circle cx="1.2" cy="299.1" r="19.5" fill="#27a866" fill-opacity="0.93" stroke="#fff" stroke-opacity="0.85" stroke-width="1.6"/><circle cx="11.8" cy="320.3" r="19.5" fill="#4ec392" fill-opacity="0.93" stroke="#fff" stroke-opacity="0.85" stroke-width="1.6"/><circle cx="91.3" cy="267.3" r="19.5" fill="#27a866" fill-opacity="0.93" stroke="#fff" stroke-opacity="0.85" stroke-width="1.6"/><circle cx="35.6" cy="336.2" r="19.5" fill="#4ec392" fill-opacity="0.93" stroke="#fff" stroke-opacity="0.85" stroke-width="1.6"/><circle cx="88.6" cy="309.7" r="19.5" fill="#4ec392" fill-opacity="0.93" stroke="#fff" stroke-opacity="0.85" stroke-width="1.6"/><circle cx="75.4" cy="307.0" r="19.5" fill="#f26a21" fill-opacity="0.93" stroke="#fff" stroke-opacity="0.85" stroke-width="1.6"/><circle cx="103.5" cy="333.5" r="19.5" fill="#f8c332" fill-opacity="0.93" stroke="#fff" stroke-opacity="0.85" stroke-width="1.6"/><circle cx="55.8" cy="291.1" r="19.5" fill="#f8c332" fill-opacity="0.93" stroke="#fff" stroke-opacity="0.85" stroke-width="1.6"/><circle cx="46.2" cy="309.7" r="19.5" fill="#d41f26" fill-opacity="0.93" stroke="#fff" stroke-opacity="0.85" stroke-width="1.6"/><circle cx="24.0" cy="313.9" r="19.5" fill="#d41f26" fill-opacity="0.93" stroke="#fff" stroke-opacity="0.85" stroke-width="1.6"/><circle cx="79.6" cy="328.2" r="19.5" fill="#f26a21" fill-opacity="0.93" stroke="#fff" stroke-opacity="0.85" stroke-width="1.6"/><circle cx="71.2" cy="353.1" r="19.5" fill="#27a866" fill-opacity="0.93" stroke="#fff" stroke-opacity="0.85" stroke-width="1.6"/><circle cx="54.2" cy="370.6" r="19.5" fill="#f26a21" fill-opacity="0.93" stroke="#fff" stroke-opacity="0.85" stroke-width="1.6"/><circle cx="59.5" cy="393.4" r="19.5" fill="#f8c332" fill-opacity="0.93" stroke="#fff" stroke-opacity="0.85" stroke-width="1.6"/><circle cx="73.8" cy="454.4" r="19.5" fill="#f26a21" fill-opacity="0.93" stroke="#fff" stroke-opacity="0.85" stroke-width="1.6"/><circle cx="224.9" cy="119.3" r="19.5" fill="#f26a21" fill-opacity="0.93" stroke="#fff" stroke-opacity="0.85" stroke-width="1.6"/><circle cx="321.9" cy="138.4" r="19.5" fill="#f8c332" fill-opacity="0.93" stroke="#fff" stroke-opacity="0.85" stroke-width="1.6"/><circle cx="304.4" cy="138.4" r="19.5" fill="#d41f26" fill-opacity="0.93" stroke="#fff" stroke-opacity="0.85" stroke-width="1.6"/><circle cx="332.6" cy="193.0" r="19.5" fill="#f26a21" fill-opacity="0.93" stroke="#fff" stroke-opacity="0.85" stroke-width="1.6"/><circle cx="344.2" cy="171.8" r="19.5" fill="#d41f26" fill-opacity="0.93" stroke="#fff" stroke-opacity="0.85" stroke-width="1.6"/><circle cx="268.9" cy="177.1" r="19.5" fill="#27a866" fill-opacity="0.93" stroke="#fff" stroke-opacity="0.85" stroke-width="1.6"/><circle cx="253.0" cy="186.7" r="19.5" fill="#27a866" fill-opacity="0.93" stroke="#fff" stroke-opacity="0.85" stroke-width="1.6"/><circle cx="298.1" cy="214.2" r="19.5" fill="#4ec392" fill-opacity="0.93" stroke="#fff" stroke-opacity="0.85" stroke-width="1.6"/><circle cx="290.1" cy="187.7" r="19.5" fill="#f8c332" fill-opacity="0.93" stroke="#fff" stroke-opacity="0.85" stroke-width="1.6"/><circle cx="305.0" cy="193.0" r="19.5" fill="#f8c332" fill-opacity="0.93" stroke="#fff" stroke-opacity="0.85" stroke-width="1.6"/><circle cx="272.6" cy="341.5" r="19.5" fill="#d41f26" fill-opacity="0.93" stroke="#fff" stroke-opacity="0.85" stroke-width="1.6"/><circle cx="457.7" cy="233.8" r="19.5" fill="#f26a21" fill-opacity="0.93" stroke="#fff" stroke-opacity="0.85" stroke-width="1.6"/><circle cx="404.1" cy="293.8" r="19.5" fill="#f26a21" fill-opacity="0.93" stroke="#fff" stroke-opacity="0.85" stroke-width="1.6"/><circle cx="412.1" cy="276.8" r="19.5" fill="#d41f26" fill-opacity="0.93" stroke="#fff" stroke-opacity="0.85" stroke-width="1.6"/><circle cx="495.3" cy="307.0" r="19.5" fill="#f26a21" fill-opacity="0.93" stroke="#fff" stroke-opacity="0.85" stroke-width="1.6"/><circle cx="560.5" cy="321.9" r="19.5" fill="#d41f26" fill-opacity="0.93" stroke="#fff" stroke-opacity="0.85" stroke-width="1.6"/><circle cx="600.8" cy="299.6" r="19.5" fill="#27a866" fill-opacity="0.93" stroke="#fff" stroke-opacity="0.85" stroke-width="1.6"/><circle cx="571.2" cy="361.1" r="19.5" fill="#f8c332" fill-opacity="0.93" stroke="#fff" stroke-opacity="0.85" stroke-width="1.6"/><circle cx="687.8" cy="326.1" r="19.5" fill="#f8c332" fill-opacity="0.93" stroke="#fff" stroke-opacity="0.85" stroke-width="1.6"/><circle cx="660.2" cy="438.5" r="19.5" fill="#27a866" fill-opacity="0.93" stroke="#fff" stroke-opacity="0.85" stroke-width="1.6"/></g></svg>
<svg class="a" style="left:2343.0px;top:1333.0px;" width="140" height="42" viewBox="0 0 140 42"><circle cx="20" cy="21" r="18" fill="#fff" stroke="#8a8a8a" stroke-width="3"/><path d="M13 28 L16 18 A6 6 0 1 1 22 27 Z" fill="#8a8a8a"/></svg>
<div class="t" style="left:2390.0px;top:1337.1px;font-size:33.0px;line-height:33.0px;color:#fff;font-weight:700;-webkit-text-stroke:2.5px #8a8a8a;paint-order:stroke fill;letter-spacing:-1px;">mapbox</div>
<div class="a" style="left:2536.0px;top:1332.0px;width:46.0px;height:46.0px;border-radius:50%;background:rgba(255,255,255,0.5);"></div>
<div class="a" style="left:2545.0px;top:1341.0px;width:28.0px;height:28.0px;border-radius:50%;background:#555;"></div>
<div class="t" style="left:2559.0px;top:1345.4px;font-size:22.0px;line-height:22.0px;color:#fff;font-weight:700;transform:translateX(-50%);transform-origin:50% 0;">i</div>
<div class="a" style="left:831.0px;top:1411.0px;width:778.0px;height:688.0px;border-radius:31px;background:#fbfbfb;border:2px solid #bfbfbf;"></div>
<div class="t" style="left:875.0px;top:1446.3px;font-size:31.0px;line-height:31.0px;color:#2b2b2b;font-weight:700;transform: scaleX(0.9425);transform-origin:0 0;">Comprehensive Retail Grid</div>
<div class="a" style="left:840px;top:1490px;width:752px;height:600px;overflow:hidden">
<div class="t" style="left:36.0px;top:22.4px;font-size:22.0px;line-height:22.0px;color:#333;font-weight:700;transform:scaleX(0.9084);transform-origin:0 0;">CUSTOMER</div>
<div class="t" style="left:36.0px;top:49.4px;font-size:22.0px;line-height:22.0px;color:#333;font-weight:700;transform:scaleX(0.9297);transform-origin:0 0;">CHANNEL</div>
<div class="t" style="left:210.0px;top:22.4px;font-size:22.0px;line-height:22.0px;color:#333;font-weight:700;transform:scaleX(0.8803);transform-origin:0 0;">RETAIL</div>
<div class="t" style="left:210.0px;top:49.4px;font-size:22.0px;line-height:22.0px;color:#333;font-weight:700;transform:scaleX(0.9297);transform-origin:0 0;">CHANNEL</div>
<div class="t" style="left:370.0px;top:22.4px;font-size:22.0px;line-height:22.0px;color:#333;font-weight:700;transform:scaleX(0.8856);transform-origin:0 0;">TERRITORY</div>
<div class="t" style="left:370.0px;top:49.4px;font-size:22.0px;line-height:22.0px;color:#333;font-weight:700;transform:scaleX(0.9149);transform-origin:0 0;">MANAGER</div>
<div class="t" style="left:538.5px;top:22.4px;font-size:22.0px;line-height:22.0px;color:#333;font-weight:700;transform:scaleX(0.9091);transform-origin:0 0;">ACCOUNT</div>
<div class="t" style="left:538.5px;top:49.4px;font-size:22.0px;line-height:22.0px;color:#333;font-weight:700;transform:scaleX(0.9051);transform-origin:0 0;">ENGINEER</div>
<div class="t" style="left:699.0px;top:22.4px;font-size:22.0px;line-height:22.0px;color:#333;font-weight:700;transform:scaleX(0.9091);transform-origin:0 0;">ACCOUNT</div>
<div class="t" style="left:699.0px;top:49.4px;font-size:22.0px;line-height:22.0px;color:#333;font-weight:700;transform:scaleX(0.9303);transform-origin:0 0;">EXECUTIVE</div>
<div class="a" style="left:8.0px;top:115.0px;width:752.0px;height:2px;background:#969696"></div>
<div class="t" style="left:36.0px;top:133.0px;font-size:23.0px;line-height:23.0px;color:#333;font-weight:400;transform:scaleX(0.9883);transform-origin:0 0;">Affiliates</div>
<div class="t" style="left:210.0px;top:133.0px;font-size:23.0px;line-height:23.0px;color:#333;font-weight:400;transform:scaleX(0.9747);transform-origin:0 0;">Telephone</div>
<div class="t" style="left:370.0px;top:133.0px;font-size:23.0px;line-height:23.0px;color:#333;font-weight:400;transform:scaleX(0.9495);transform-origin:0 0;">Website</div>
<div class="t" style="left:538.5px;top:133.0px;font-size:23.0px;line-height:23.0px;color:#333;font-weight:400;transform:scaleX(0.9495);transform-origin:0 0;">Website</div>
<div class="t" style="left:699.0px;top:133.0px;font-size:23.0px;line-height:23.0px;color:#333;font-weight:400;transform:scaleX(0.9495);transform-origin:0 0;">Website</div>
<div class="t" style="left:36.0px;top:218.5px;font-size:23.0px;line-height:23.0px;color:#333;font-weight:400;transform:scaleX(1.0102);transform-origin:0 0;">Distributors</div>
<div class="t" style="left:210.0px;top:218.5px;font-size:23.0px;line-height:23.0px;color:#333;font-weight:400;transform:scaleX(0.9363);transform-origin:0 0;">Chat</div>
<div class="t" style="left:370.0px;top:218.5px;font-size:23.0px;line-height:23.0px;color:#333;font-weight:400;transform:scaleX(0.9867);transform-origin:0 0;">Darth</div>
<div class="t" style="left:538.5px;top:218.5px;font-size:23.0px;line-height:23.0px;color:#333;font-weight:400;transform:scaleX(0.9495);transform-origin:0 0;">Website</div>
<div class="t" style="left:699.0px;top:218.5px;font-size:23.0px;line-height:23.0px;color:#333;font-weight:400;transform:scaleX(0.9495);transform-origin:0 0;">Website</div>
<div class="t" style="left:370.0px;top:245.5px;font-size:23.0px;line-height:23.0px;color:#333;font-weight:400;transform:scaleX(0.9634);transform-origin:0 0;">Vader</div>
<div class="t" style="left:210.0px;top:303.5px;font-size:23.0px;line-height:23.0px;color:#333;font-weight:400;transform:scaleX(0.9995);transform-origin:0 0;">Other</div>
<div class="t" style="left:370.0px;top:303.5px;font-size:23.0px;line-height:23.0px;color:#333;font-weight:400;transform:scaleX(0.9495);transform-origin:0 0;">Website</div>
<div class="t" style="left:538.5px;top:303.5px;font-size:23.0px;line-height:23.0px;color:#333;font-weight:400;transform:scaleX(0.9495);transform-origin:0 0;">Website</div>
<div class="t" style="left:699.0px;top:303.5px;font-size:23.0px;line-height:23.0px;color:#333;font-weight:400;transform:scaleX(0.9495);transform-origin:0 0;">Website</div>
<div class="t" style="left:370.0px;top:418.5px;font-size:23.0px;line-height:23.0px;color:#333;font-weight:400;transform:scaleX(0.9804);transform-origin:0 0;">Iron Man</div>
<div class="t" style="left:538.5px;top:418.5px;font-size:23.0px;line-height:23.0px;color:#333;font-weight:400;transform:scaleX(0.9495);transform-origin:0 0;">Website</div>
<div class="t" style="left:699.0px;top:418.5px;font-size:23.0px;line-height:23.0px;color:#333;font-weight:400;transform:scaleX(0.9495);transform-origin:0 0;">Website</div>
<div class="t" style="left:210.0px;top:503.5px;font-size:23.0px;line-height:23.0px;color:#333;font-weight:400;transform:scaleX(0.9366);transform-origin:0 0;">Store</div>
<div class="t" style="left:370.0px;top:503.5px;font-size:23.0px;line-height:23.0px;color:#333;font-weight:400;transform:scaleX(0.9495);transform-origin:0 0;">Website</div>
<div class="t" style="left:538.5px;top:503.5px;font-size:23.0px;line-height:23.0px;color:#333;font-weight:400;transform:scaleX(0.9495);transform-origin:0 0;">Website</div>
<div class="t" style="left:699.0px;top:503.5px;font-size:23.0px;line-height:23.0px;color:#333;font-weight:400;transform:scaleX(0.9495);transform-origin:0 0;">Website</div>
<div class="a" style="left:8.0px;top:200.5px;width:752.0px;height:2px;background:#e3e3e3"></div>
<div class="a" style="left:182.0px;top:285.5px;width:578.0px;height:2px;background:#e3e3e3"></div>
<div class="a" style="left:342.0px;top:400.5px;width:418.0px;height:2px;background:#e3e3e3"></div>
<div class="a" style="left:182.0px;top:485.5px;width:578.0px;height:2px;background:#e3e3e3"></div>
<div class="a" style="left:342.0px;top:570.5px;width:418.0px;height:2px;background:#e3e3e3"></div>
</div>
<div class="a" style="left:1619.0px;top:1411.0px;width:815.0px;height:688.0px;border-radius:31px;background:#fbfbfb;border:2px solid #bfbfbf;"></div>
<div class="t" style="left:1662.5px;top:1446.3px;font-size:31.0px;line-height:31.0px;color:#2b2b2b;font-weight:700;transform: scaleX(0.9277);transform-origin:0 0;">Channel Sales Bar</div>
<svg class="a" style="left:0;top:0" width="3838" height="2108"><defs><linearGradient id="bg2" x1="0" x2="1" y1="0" y2="0"><stop offset="0" stop-color="#f7845a"/><stop offset="1" stop-color="#fdd565"/></linearGradient></defs><line x1="1915.0" y1="1497" x2="1915.0" y2="2033" stroke="#8c8c8c" stroke-width="1.6" stroke-dasharray="5 4"/><line x1="2036.5" y1="1497" x2="2036.5" y2="2033" stroke="#8c8c8c" stroke-width="1.6" stroke-dasharray="5 4"/><line x1="2156.5" y1="1497" x2="2156.5" y2="2033" stroke="#8c8c8c" stroke-width="1.6" stroke-dasharray="5 4"/><line x1="2278.5" y1="1497" x2="2278.5" y2="2033" stroke="#8c8c8c" stroke-width="1.6" stroke-dasharray="5 4"/><rect x="1795" y="1525.0" width="551.5" height="15" fill="url(#bg2)" fill-opacity="0.88" stroke="#e6e6e6" stroke-width="2"/><rect x="1796" y="1525.0" width="550.5" height="1.3" fill="#a8a8a8"/><rect x="1795" y="1570.5" width="283.5" height="15" fill="url(#bg2)" fill-opacity="0.88" stroke="#e6e6e6" stroke-width="2"/><rect x="1796" y="1570.5" width="282.5" height="1.3" fill="#a8a8a8"/><rect x="1795" y="1616.5" width="62.0" height="15" fill="url(#bg2)" fill-opacity="0.88" stroke="#e6e6e6" stroke-width="2"/><rect x="1796" y="1616.5" width="61.0" height="1.3" fill="#a8a8a8"/><rect x="1795" y="1662.5" width="32.0" height="15" fill="url(#bg2)" fill-opacity="0.88" stroke="#e6e6e6" stroke-width="2"/><rect x="1796" y="1662.5" width="31.0" height="1.3" fill="#a8a8a8"/><rect x="1795" y="1710.0" width="18.5" height="15" fill="url(#bg2)" fill-opacity="0.88" stroke="#e6e6e6" stroke-width="2"/><rect x="1796" y="1710.0" width="17.5" height="1.3" fill="#a8a8a8"/><rect x="1795" y="1756.0" width="16.0" height="15" fill="url(#bg2)" fill-opacity="0.88" stroke="#e6e6e6" stroke-width="2"/><rect x="1796" y="1756.0" width="15.0" height="1.3" fill="#a8a8a8"/><rect x="1795" y="1802.5" width="4.5" height="15" fill="url(#bg2)" fill-opacity="0.88" stroke="#e6e6e6" stroke-width="2"/><rect x="1796" y="1802.5" width="3.5" height="1.3" fill="#a8a8a8"/><rect x="1795" y="1849.0" width="4" height="16" fill="#e2e2e2"/><rect x="1795" y="1895.0" width="4" height="16" fill="#e2e2e2"/><rect x="1795" y="1941.0" width="4" height="16" fill="#e2e2e2"/><rect x="1795" y="1987.0" width="4" height="16" fill="#e2e2e2"/></svg>
<div class="t" style="left:1781.0px;top:1519.2px;font-size:24.0px;line-height:24.0px;color:#333;transform:translateX(-100%) scaleX(0.9862);transform-origin:100% 0;">Retail</div>
<div class="t" style="left:1781.0px;top:1564.7px;font-size:24.0px;line-height:24.0px;color:#333;transform:translateX(-100%) scaleX(1.0290);transform-origin:100% 0;">Retail Chain</div>
<div class="t" style="left:1781.0px;top:1610.7px;font-size:24.0px;line-height:24.0px;color:#333;transform:translateX(-100%) scaleX(1.0449);transform-origin:100% 0;">Supplier</div>
<div class="t" style="left:1781.0px;top:1656.7px;font-size:24.0px;line-height:24.0px;color:#333;transform:translateX(-100%) scaleX(1.0794);transform-origin:100% 0;">Distributors</div>
<div class="t" style="left:1781.0px;top:1704.2px;font-size:24.0px;line-height:24.0px;color:#333;transform:translateX(-100%) scaleX(1.0578);transform-origin:100% 0;">Other</div>
<div class="t" style="left:1781.0px;top:1750.2px;font-size:24.0px;line-height:24.0px;color:#333;transform:translateX(-100%) scaleX(0.9946);transform-origin:100% 0;">Franchisees</div>
<div class="t" style="left:1781.0px;top:1796.7px;font-size:24.0px;line-height:24.0px;color:#333;transform:translateX(-100%) scaleX(1.0619);transform-origin:100% 0;">Internal</div>
<div class="t" style="left:1781.0px;top:1844.2px;font-size:24.0px;line-height:24.0px;color:#333;transform:translateX(-100%) scaleX(1.0212);transform-origin:100% 0;">Education</div>
<div class="t" style="left:1781.0px;top:1890.2px;font-size:24.0px;line-height:24.0px;color:#333;transform:translateX(-100%) scaleX(1.0000);transform-origin:100% 0;">New</div>
<div class="t" style="left:1781.0px;top:1936.2px;font-size:24.0px;line-height:24.0px;color:#333;transform:translateX(-100%) scaleX(1.0652);transform-origin:100% 0;">Virtual</div>
<div class="t" style="left:1781.0px;top:1982.2px;font-size:24.0px;line-height:24.0px;color:#333;transform:translateX(-100%) scaleX(1.0635);transform-origin:100% 0;">Affiliates</div>
<div class="t" style="left:1912.8px;top:2048.7px;font-size:24.0px;line-height:24.0px;color:#333;transform:translateX(-50%) scaleX(1.0174);transform-origin:50% 0;">$2M</div>
<div class="t" style="left:2034.8px;top:2048.7px;font-size:24.0px;line-height:24.0px;color:#333;transform:translateX(-50%) scaleX(1.0174);transform-origin:50% 0;">$4M</div>
<div class="t" style="left:2154.8px;top:2048.7px;font-size:24.0px;line-height:24.0px;color:#333;transform:translateX(-50%) scaleX(1.0174);transform-origin:50% 0;">$6M</div>
<div class="t" style="left:2277.2px;top:2048.7px;font-size:24.0px;line-height:24.0px;color:#333;transform:translateX(-50%) scaleX(1.0174);transform-origin:50% 0;">$8M</div>
<div class="a" style="left:2445.0px;top:1411.0px;width:624.0px;height:688.0px;border-radius:31px;background:#fbfbfb;border:2px solid #bfbfbf;"></div>
<div class="t" style="left:2489.0px;top:1446.3px;font-size:31.0px;line-height:31.0px;color:#2b2b2b;font-weight:700;transform: scaleX(0.9246);transform-origin:0 0;">Channel Sales Share</div>
<svg class="a" style="left:0;top:0" width="3838" height="2108"><path d="M2760.00 1602.50 A187.5 187.5 0 1 1 2679.87 1959.52 L2703.80 1908.89 A131.5 131.5 0 1 0 2760.00 1658.50 Z" fill="#222831" stroke="#f4f4f4" stroke-width="2"/><path d="M2679.87 1959.52 A187.5 187.5 0 0 1 2618.49 1666.99 L2660.76 1703.73 A131.5 131.5 0 0 0 2703.80 1908.89 Z" fill="#adc2ca" stroke="#f4f4f4" stroke-width="2"/><path d="M2618.49 1666.99 A187.5 187.5 0 0 1 2677.81 1621.48 L2702.35 1671.81 A131.5 131.5 0 0 0 2660.76 1703.73 Z" fill="#c9a99b" stroke="#f4f4f4" stroke-width="2"/><path d="M2677.81 1621.48 A187.5 187.5 0 0 1 2715.27 1607.91 L2728.63 1662.30 A131.5 131.5 0 0 0 2702.35 1671.81 Z" fill="#fcc400" stroke="#f4f4f4" stroke-width="2"/><path d="M2715.27 1607.91 A187.5 187.5 0 0 1 2735.85 1604.06 L2743.06 1659.60 A131.5 131.5 0 0 0 2728.63 1662.30 Z" fill="#cbc3af" stroke="#f4f4f4" stroke-width="2"/><path d="M2735.85 1604.06 A187.5 187.5 0 0 1 2753.46 1602.61 L2755.41 1658.58 A131.5 131.5 0 0 0 2743.06 1659.60 Z" fill="#4a5562" stroke="#f4f4f4" stroke-width="2"/><path d="M2753.46 1602.61 A187.5 187.5 0 0 1 2757.71 1602.51 L2758.39 1658.51 A131.5 131.5 0 0 0 2755.41 1658.58 Z" fill="#9fb5c0" stroke="#f4f4f4" stroke-width="2"/><path d="M2757.71 1602.51 A187.5 187.5 0 0 1 2760.00 1602.50 L2760.00 1658.50 A131.5 131.5 0 0 0 2758.39 1658.51 Z" fill="#dedede" stroke="#f4f4f4" stroke-width="2"/><path d="M2742 1528 H2757 V1605" stroke="#555" stroke-width="1.6" fill="none"/><path d="M2742 1556 H2756" stroke="#9fb5c0" stroke-width="1.6" fill="none"/><path d="M2703 1584 H2718 L2755 1604" stroke="#aaa" stroke-width="1.6" fill="none"/><path d="M2643 1612 L2748 1605" stroke="#4a5562" stroke-width="1.6" fill="none"/><path d="M2610 1640 H2624 L2712 1613" stroke="#cbc3af" stroke-width="1.6" fill="none"/><path d="M2567 1696 H2582 L2650 1640" stroke="#c9a99b" stroke-width="1.6" fill="none"/></svg>
<div class="t" style="left:2732.5px;top:1512.2px;font-size:24.0px;line-height:24.0px;color:#333;transform:translateX(-100%) scaleX(0.9896);transform-origin:100% 0;">New</div>
<div class="t" style="left:2732.5px;top:1539.7px;font-size:24.0px;line-height:24.0px;color:#333;transform:translateX(-100%) scaleX(1.0306);transform-origin:100% 0;">Education</div>
<div class="t" style="left:2691.0px;top:1568.2px;font-size:24.0px;line-height:24.0px;color:#333;transform:translateX(-100%) scaleX(1.0619);transform-origin:100% 0;">Internal</div>
<div class="t" style="left:2631.0px;top:1595.7px;font-size:24.0px;line-height:24.0px;color:#333;transform:translateX(-100%) scaleX(0.9984);transform-origin:100% 0;">Franchisees</div>
<div class="t" style="left:2598.0px;top:1623.7px;font-size:24.0px;line-height:24.0px;color:#333;transform:translateX(-100%) scaleX(1.0661);transform-origin:100% 0;">Other</div>
<div class="t" style="left:2556.0px;top:1679.7px;font-size:24.0px;line-height:24.0px;color:#333;transform:translateX(-100%) scaleX(1.0449);transform-origin:100% 0;">Supplier</div>
<div class="a" style="left:3077.0px;top:402.0px;width:761.0px;height:1706.0px;background:#fafafa;border-left:2px solid #d6d6d6;"></div>
<div class="a" style="left:3079.0px;top:402.0px;width:759.0px;height:117.0px;background:#f4f4f4;"></div>
<div class="a" style="left:3387.0px;top:402.0px;width:451.0px;height:62.0px;background:#e8ebee;"></div>
<svg class="a" style="left:3098.0px;top:416.0px;" width="29" height="30" viewBox="0 0 29 30"><rect x="1.2" y="4" width="26.6" height="25" rx="3.5" stroke="#222" stroke-width="2.2" fill="none"/><rect x="11" y="0.5" width="7" height="3" fill="#222"/><rect x="5" y="9" width="19" height="8" rx="1.5" stroke="#222" stroke-width="2" fill="none"/><path d="M10 11V15M19 11V15" stroke="#222" stroke-width="1.8"/></svg>
<div class="t" style="left:3142.4px;top:420.1px;font-size:23.5px;line-height:23.5px;color:#333;transform: scaleX(1.0171);transform-origin:0 0;">AUTO DASHBOARD</div>
<svg class="a" style="left:3795.0px;top:479.0px;" width="30" height="30" viewBox="0 0 30 30"><path d="M14 3L26 15L17 24H9L4 19Z M8 9L20 21" stroke="#222" stroke-width="2.2" fill="none" stroke-linejoin="round"/><path d="M20 27H27" stroke="#222" stroke-width="2.2"/></svg>
<div class="t" style="left:3457.6px;top:799.1px;font-size:23.5px;line-height:23.5px;color:#222;transform:translateX(-50%);transform-origin:50% 0;">15:27</div>
<div class="a" style="left:3254.0px;top:861.0px;width:544.0px;height:368.0px;border-radius:14px;background:#e5eefa;"></div>
<svg class="a" style="left:3270.0px;top:880.0px;" width="290" height="220" viewBox="0 0 1865 1415"><defs><clipPath id="thc"><rect x="85" y="62" width="1665" height="1278" rx="70"/></clipPath></defs><g clip-path="url(#thc)"><rect x="85" y="62" width="1665" height="1278" fill="#dedede"/><rect x="85" y="62" width="1665" height="175" fill="#15595d"/><rect x="505" y="62" width="6" height="175" fill="#6f9c9e"/><rect x="918" y="62" width="6" height="175" fill="#6f9c9e"/><rect x="1330" y="62" width="6" height="175" fill="#6f9c9e"/><text x="125" y="162" font-size="46" fill="#fff" font-family="Liberation Sans">$204,313</text><rect x="370" y="128" width="100" height="34" fill="#58b848"/><rect x="125" y="88" width="60" height="14" fill="#8fb5b6"/><rect x="125" y="178" width="150" height="12" fill="#8fb5b6"/><path d="M95 232 L95 212 L185 218 L275 208 L355 216 L425 206 L495 214 L495 232Z" fill="#d7e3e3" opacity="0.8"/><text x="538" y="162" font-size="46" fill="#fff" font-family="Liberation Sans">11,013</text><rect x="780" y="128" width="100" height="34" fill="#58b848"/><rect x="538" y="88" width="60" height="14" fill="#8fb5b6"/><rect x="538" y="178" width="150" height="12" fill="#8fb5b6"/><path d="M508 232 L508 212 L598 218 L688 208 L768 216 L838 206 L908 214 L908 232Z" fill="#d7e3e3" opacity="0.8"/><text x="951" y="162" font-size="46" fill="#fff" font-family="Liberation Sans">36%</text><rect x="1195" y="128" width="100" height="34" fill="#58b848"/><rect x="951" y="88" width="60" height="14" fill="#8fb5b6"/><rect x="951" y="178" width="150" height="12" fill="#8fb5b6"/><path d="M921 232 L921 212 L1011 218 L1101 208 L1181 216 L1251 206 L1321 214 L1321 232Z" fill="#d7e3e3" opacity="0.8"/><text x="1364" y="162" font-size="46" fill="#fff" font-family="Liberation Sans">$130,611</text><rect x="1620" y="128" width="100" height="34" fill="#58b848"/><rect x="1364" y="88" width="60" height="14" fill="#8fb5b6"/><rect x="1364" y="178" width="150" height="12" fill="#8fb5b6"/><path d="M1334 232 L1334 212 L1424 218 L1514 208 L1594 216 L1664 206 L1734 214 L1734 232Z" fill="#d7e3e3" opacity="0.8"/><rect x="90" y="250" width="530" height="525" fill="#fdfdfd"/><rect x="635" y="250" width="550" height="525" fill="#fdfdfd"/><rect x="1195" y="250" width="550" height="525" fill="#fdfdfd"/><rect x="90" y="790" width="530" height="545" fill="#fdfdfd"/><rect x="635" y="790" width="550" height="545" fill="#fdfdfd"/><rect x="1195" y="790" width="550" height="545" fill="#fdfdfd"/><rect x="169" y="268" width="371" height="16" fill="#9a9a9a"/><rect x="717" y="268" width="385" height="16" fill="#9a9a9a"/><rect x="1277" y="268" width="385" height="16" fill="#9a9a9a"/><rect x="169" y="808" width="371" height="16" fill="#9a9a9a"/><rect x="717" y="808" width="385" height="16" fill="#9a9a9a"/><rect x="1277" y="808" width="385" height="16" fill="#9a9a9a"/><rect x="103" y="310" width="252" height="32" fill="#1b6b6e"/><rect x="400" y="318" width="160" height="12" fill="#c8c8c8"/><rect x="90" y="360" width="530" height="12" fill="#e6e6e6"/><rect x="220" y="420" width="385" height="40" fill="#6cc1bb"/><rect x="105" y="435" width="100" height="10" fill="#c4c4c4"/><rect x="220" y="471" width="273" height="40" fill="#6cc1bb"/><rect x="105" y="486" width="100" height="10" fill="#c4c4c4"/><rect x="220" y="522" width="263" height="40" fill="#6cc1bb"/><rect x="105" y="537" width="100" height="10" fill="#c4c4c4"/><rect x="220" y="573" width="220" height="40" fill="#6cc1bb"/><rect x="105" y="588" width="100" height="10" fill="#c4c4c4"/><rect x="220" y="624" width="192" height="40" fill="#6cc1bb"/><rect x="105" y="639" width="100" height="10" fill="#c4c4c4"/><rect x="262" y="690" width="8" height="40" fill="#bbb"/><rect x="311" y="690" width="8" height="40" fill="#bbb"/><rect x="360" y="690" width="8" height="40" fill="#bbb"/><rect x="409" y="690" width="8" height="40" fill="#bbb"/><rect x="458" y="690" width="8" height="40" fill="#bbb"/><rect x="507" y="690" width="8" height="40" fill="#bbb"/><rect x="556" y="690" width="8" height="40" fill="#bbb"/><rect x="645" y="310" width="263" height="32" fill="#1b6b6e"/><rect x="990" y="318" width="90" height="12" fill="#c8c8c8"/><rect x="635" y="360" width="550" height="12" fill="#e6e6e6"/><rect x="650" y="385" width="520" height="30" fill="#cfcfcf" opacity="0.8"/><rect x="650" y="450" width="40" height="30" fill="#7cc5c0"/><rect x="780" y="452" width="60" height="12" fill="#bdbdbd"/><rect x="865" y="452" width="60" height="12" fill="#bdbdbd"/><rect x="980" y="452" width="60" height="12" fill="#bdbdbd"/><rect x="1105" y="452" width="60" height="12" fill="#bdbdbd"/><rect x="745" y="492" width="440" height="3" fill="#eee"/><rect x="650" y="505" width="40" height="30" fill="#7cc5c0"/><rect x="780" y="507" width="60" height="12" fill="#bdbdbd"/><rect x="865" y="507" width="60" height="12" fill="#bdbdbd"/><rect x="980" y="507" width="60" height="12" fill="#bdbdbd"/><rect x="1105" y="507" width="60" height="12" fill="#bdbdbd"/><rect x="745" y="547" width="440" height="3" fill="#eee"/><rect x="650" y="560" width="40" height="30" fill="#7cc5c0"/><rect x="780" y="562" width="60" height="12" fill="#bdbdbd"/><rect x="865" y="562" width="60" height="12" fill="#bdbdbd"/><rect x="980" y="562" width="60" height="12" fill="#bdbdbd"/><rect x="1105" y="562" width="60" height="12" fill="#bdbdbd"/><rect x="745" y="602" width="440" height="3" fill="#eee"/><rect x="650" y="615" width="40" height="30" fill="#7cc5c0"/><rect x="780" y="617" width="60" height="12" fill="#bdbdbd"/><rect x="865" y="617" width="60" height="12" fill="#bdbdbd"/><rect x="980" y="617" width="60" height="12" fill="#bdbdbd"/><rect x="1105" y="617" width="60" height="12" fill="#bdbdbd"/><rect x="745" y="657" width="440" height="3" fill="#eee"/><rect x="650" y="670" width="40" height="30" fill="#7cc5c0"/><rect x="780" y="672" width="60" height="12" fill="#bdbdbd"/><rect x="865" y="672" width="60" height="12" fill="#bdbdbd"/><rect x="980" y="672" width="60" height="12" fill="#bdbdbd"/><rect x="1105" y="672" width="60" height="12" fill="#bdbdbd"/><rect x="745" y="712" width="440" height="3" fill="#eee"/><rect x="650" y="725" width="40" height="30" fill="#7cc5c0"/><rect x="780" y="727" width="60" height="12" fill="#bdbdbd"/><rect x="865" y="727" width="60" height="12" fill="#bdbdbd"/><rect x="980" y="727" width="60" height="12" fill="#bdbdbd"/><rect x="1105" y="727" width="60" height="12" fill="#bdbdbd"/><rect x="745" y="767" width="440" height="3" fill="#eee"/><rect x="1197" y="300" width="545" height="40" fill="#f0f0f0"/><rect x="1197" y="340" width="545" height="430" fill="#cbcdd1"/><path d="M1197 470 L1300 420 L1450 370 L1560 345 L1740 350 L1740 610 L1680 700 L1600 740 L1500 720 L1440 640 L1400 600 L1340 610 L1290 590 L1197 560 Z" fill="#ebebeb"/><path d="M1320 480 L1390 475 L1395 560 L1340 570 L1315 540Z" fill="#76c6c0"/><path d="M1450 630 L1560 625 L1625 650 L1610 700 L1560 715 L1500 700 L1455 680Z" fill="#1f6f72"/><circle cx="1545" cy="675" r="14" fill="#f5c23a"/><circle cx="1500" cy="660" r="8" fill="#76c6c0"/><rect x="90" y="900" width="105" height="435" fill="#e3f1f1"/><rect x="410" y="900" width="100" height="435" fill="#fdf1e3"/><rect x="105" y="912" width="60" height="9" fill="#bdbdbd"/><rect x="245" y="912" width="40" height="9" fill="#bdbdbd"/><rect x="330" y="912" width="50" height="9" fill="#bdbdbd"/><rect x="465" y="912" width="25" height="9" fill="#f0a068"/><rect x="528" y="912" width="72" height="9" fill="#1f6f72"/><rect x="105" y="947" width="60" height="9" fill="#bdbdbd"/><rect x="245" y="947" width="40" height="9" fill="#bdbdbd"/><rect x="330" y="947" width="50" height="9" fill="#bdbdbd"/><rect x="465" y="947" width="25" height="9" fill="#f0a068"/><rect x="528" y="947" width="72" height="9" fill="#1f6f72"/><rect x="105" y="983" width="60" height="9" fill="#bdbdbd"/><rect x="245" y="983" width="40" height="9" fill="#bdbdbd"/><rect x="330" y="983" width="50" height="9" fill="#bdbdbd"/><rect x="465" y="983" width="25" height="9" fill="#f0a068"/><rect x="528" y="983" width="72" height="9" fill="#1f6f72"/><rect x="105" y="1018" width="60" height="9" fill="#bdbdbd"/><rect x="245" y="1018" width="40" height="9" fill="#bdbdbd"/><rect x="330" y="1018" width="50" height="9" fill="#bdbdbd"/><rect x="465" y="1018" width="25" height="9" fill="#f0a068"/><rect x="528" y="1018" width="72" height="9" fill="#1f6f72"/><rect x="105" y="1054" width="60" height="9" fill="#bdbdbd"/><rect x="245" y="1054" width="40" height="9" fill="#bdbdbd"/><rect x="330" y="1054" width="50" height="9" fill="#bdbdbd"/><rect x="465" y="1054" width="25" height="9" fill="#f0a068"/><rect x="528" y="1054" width="72" height="9" fill="#1f6f72"/><rect x="105" y="1089" width="60" height="9" fill="#bdbdbd"/><rect x="245" y="1089" width="40" height="9" fill="#bdbdbd"/><rect x="330" y="1089" width="50" height="9" fill="#bdbdbd"/><rect x="465" y="1089" width="25" height="9" fill="#f0a068"/><rect x="528" y="1089" width="72" height="9" fill="#1f6f72"/><rect x="105" y="1125" width="60" height="9" fill="#bdbdbd"/><rect x="245" y="1125" width="40" height="9" fill="#bdbdbd"/><rect x="330" y="1125" width="50" height="9" fill="#bdbdbd"/><rect x="465" y="1125" width="25" height="9" fill="#f0a068"/><rect x="528" y="1125" width="72" height="9" fill="#1f6f72"/><rect x="105" y="1160" width="60" height="9" fill="#bdbdbd"/><rect x="245" y="1160" width="40" height="9" fill="#bdbdbd"/><rect x="330" y="1160" width="50" height="9" fill="#bdbdbd"/><rect x="465" y="1160" width="25" height="9" fill="#f0a068"/><rect x="528" y="1160" width="72" height="9" fill="#1f6f72"/><rect x="105" y="1196" width="60" height="9" fill="#bdbdbd"/><rect x="245" y="1196" width="40" height="9" fill="#bdbdbd"/><rect x="330" y="1196" width="50" height="9" fill="#bdbdbd"/><rect x="465" y="1196" width="25" height="9" fill="#f0a068"/><rect x="528" y="1196" width="72" height="9" fill="#1f6f72"/><rect x="105" y="1231" width="60" height="9" fill="#bdbdbd"/><rect x="245" y="1231" width="40" height="9" fill="#bdbdbd"/><rect x="330" y="1231" width="50" height="9" fill="#bdbdbd"/><rect x="465" y="1231" width="25" height="9" fill="#f0a068"/><rect x="528" y="1231" width="72" height="9" fill="#1f6f72"/><rect x="105" y="1267" width="60" height="9" fill="#bdbdbd"/><rect x="245" y="1267" width="40" height="9" fill="#bdbdbd"/><rect x="330" y="1267" width="50" height="9" fill="#bdbdbd"/><rect x="465" y="1267" width="25" height="9" fill="#f0a068"/><rect x="528" y="1267" width="72" height="9" fill="#1f6f72"/><rect x="105" y="1302" width="60" height="9" fill="#bdbdbd"/><rect x="245" y="1302" width="40" height="9" fill="#bdbdbd"/><rect x="330" y="1302" width="50" height="9" fill="#bdbdbd"/><rect x="465" y="1302" width="25" height="9" fill="#f0a068"/><rect x="528" y="1302" width="72" height="9" fill="#1f6f72"/><rect x="105" y="850" width="480" height="30" fill="#cfcfcf" opacity="0.7"/><rect x="645" y="848" width="263" height="34" fill="#1b6b6e"/><rect x="985" y="858" width="110" height="12" fill="#c8c8c8"/><rect x="635" y="900" width="550" height="12" fill="#e6e6e6"/><rect x="772" y="962" width="393" height="28" fill="#f5c542"/><rect x="660" y="971" width="100" height="10" fill="#c4c4c4"/><rect x="772" y="996" width="281" height="28" fill="#6cc1bb"/><rect x="660" y="1005" width="100" height="10" fill="#c4c4c4"/><rect x="772" y="1030" width="250" height="28" fill="#6cc1bb"/><rect x="660" y="1039" width="100" height="10" fill="#c4c4c4"/><rect x="772" y="1064" width="243" height="28" fill="#f5c542"/><rect x="660" y="1073" width="100" height="10" fill="#c4c4c4"/><rect x="772" y="1098" width="206" height="28" fill="#ee6b6b"/><rect x="660" y="1107" width="100" height="10" fill="#c4c4c4"/><rect x="772" y="1132" width="153" height="28" fill="#6cc1bb"/><rect x="660" y="1141" width="100" height="10" fill="#c4c4c4"/><rect x="772" y="1166" width="113" height="28" fill="#f5c542"/><rect x="660" y="1175" width="100" height="10" fill="#c4c4c4"/><rect x="772" y="1200" width="61" height="28" fill="#6cc1bb"/><rect x="660" y="1209" width="100" height="10" fill="#c4c4c4"/><rect x="772" y="1234" width="53" height="28" fill="#ee6b6b"/><rect x="660" y="1243" width="100" height="10" fill="#c4c4c4"/><rect x="772" y="1268" width="50" height="28" fill="#ee6b6b"/><rect x="660" y="1277" width="100" height="10" fill="#c4c4c4"/><path d="M1412.0 950.0 A138 138 0 1 1 1353.7 1213.1 L1370.6 1176.8 A98 98 0 1 0 1412.0 990.0 Z" fill="#1b6b6e"/><path d="M1353.7 1213.1 A138 138 0 0 1 1364.8 958.3 L1378.5 995.9 A98 98 0 0 0 1370.6 1176.8 Z" fill="#76c6c0"/><path d="M1364.8 958.3 A138 138 0 0 1 1388.0 952.1 L1395.0 991.5 A98 98 0 0 0 1378.5 995.9 Z" fill="#9cc97a"/><path d="M1388.0 952.1 A138 138 0 0 1 1402.4 950.3 L1405.2 990.2 A98 98 0 0 0 1395.0 991.5 Z" fill="#f5c23a"/><path d="M1402.4 950.3 A138 138 0 0 1 1412.0 950.0 L1412.0 990.0 A98 98 0 0 0 1405.2 990.2 Z" fill="#1b6b6e"/><rect x="1645" y="1036" width="12" height="12" fill="#1b6b6e"/><rect x="1665" y="1038" width="40" height="9" fill="#c4c4c4"/><rect x="1645" y="1062" width="12" height="12" fill="#a9dcd8"/><rect x="1665" y="1064" width="40" height="9" fill="#c4c4c4"/><rect x="1645" y="1088" width="12" height="12" fill="#f5c23a"/><rect x="1665" y="1090" width="40" height="9" fill="#c4c4c4"/><rect x="1645" y="1114" width="12" height="12" fill="#9cc97a"/><rect x="1665" y="1116" width="40" height="9" fill="#c4c4c4"/><rect x="1645" y="1140" width="12" height="12" fill="#ee6b6b"/><rect x="1665" y="1142" width="40" height="9" fill="#c4c4c4"/><rect x="1645" y="1166" width="12" height="12" fill="#76c6c0"/><rect x="1665" y="1168" width="40" height="9" fill="#c4c4c4"/><rect x="1645" y="1192" width="12" height="12" fill="#1b6b6e"/><rect x="1665" y="1194" width="40" height="9" fill="#c4c4c4"/></g></svg>
<div class="t" style="left:3282.7px;top:1128.6px;font-size:30.0px;line-height:30.0px;color:#222;transform: scaleX(0.9602);transform-origin:0 0;">Create a page from this image of a</div>
<div class="t" style="left:3282.7px;top:1166.6px;font-size:30.0px;line-height:30.0px;color:#222;transform: scaleX(0.9641);transform-origin:0 0;">dashboard</div>
<div class="a" style="left:3119.0px;top:1261.5px;width:679.0px;height:529.0px;border-radius:14px;background:#f9fafb;border:2px solid #cdd6e0;"></div>
<div class="t" style="left:3145.0px;top:1305.8px;font-size:31.0px;line-height:31.0px;color:#1f2328;font-weight:700;transform: scaleX(1.0278);transform-origin:0 0;">Dashboard Changes</div>
<div class="a" style="left:3160.0px;top:1372.0px;width:8.0px;height:8.0px;border-radius:50%;background:#1f2328;"></div>
<div class="t" style="left:3184.7px;top:1359.0px;font-size:29.5px;line-height:29.5px;color:#1f2328;transform: scaleX(0.9785);transform-origin:0 0;">Created a new page using the uploaded</div>
<div class="t" style="left:3184.7px;top:1397.0px;font-size:29.5px;line-height:29.5px;color:#1f2328;transform: scaleX(0.9941);transform-origin:0 0;">image of the chart titled <b>'Sales by Main</b></div>
<div class="t" style="left:3184.7px;top:1435.0px;font-size:29.5px;line-height:29.5px;color:#1f2328;transform: scaleX(0.9871);transform-origin:0 0;"><b>Category (Rounded Bar)'</b>.</div>
<div class="a" style="left:3160.0px;top:1506.0px;width:8.0px;height:8.0px;border-radius:50%;background:#1f2328;"></div>
<div class="t" style="left:3184.7px;top:1493.0px;font-size:29.5px;line-height:29.5px;color:#1f2328;transform: scaleX(0.9908);transform-origin:0 0;">Detected that the image is of a <b>digital</b></div>
<div class="t" style="left:3184.7px;top:1531.0px;font-size:29.5px;line-height:29.5px;color:#1f2328;transform: scaleX(0.9749);transform-origin:0 0;"><b>dashboard</b>.</div>
<div class="a" style="left:3160.0px;top:1602.0px;width:8.0px;height:8.0px;border-radius:50%;background:#1f2328;"></div>
<div class="t" style="left:3184.7px;top:1589.0px;font-size:29.5px;line-height:29.5px;color:#1f2328;transform: scaleX(0.9912);transform-origin:0 0;">Added multiple visual components, including</div>
<div class="t" style="left:3184.7px;top:1627.0px;font-size:29.5px;line-height:29.5px;color:#1f2328;transform: scaleX(0.9859);transform-origin:0 0;">horizontal bar charts, KPIs, grids, a geo-</div>
<div class="t" style="left:3184.7px;top:1665.0px;font-size:29.5px;line-height:29.5px;color:#1f2328;transform: scaleX(0.9795);transform-origin:0 0;">spatial map, and a ring chart, arranged in a</div>
<div class="t" style="left:3184.7px;top:1703.0px;font-size:29.5px;line-height:29.5px;color:#1f2328;transform: scaleX(0.9905);transform-origin:0 0;">structured layout on the new page.</div>
<svg class="a" style="left:3366.0px;top:1852.0px;" width="12" height="20" viewBox="0 0 12 20"><path d="M2 2L10 10L2 18" stroke="#333" stroke-width="2" fill="none"/></svg>
<div class="t" style="left:3396.0px;top:1842.1px;font-size:26.5px;line-height:26.5px;color:#333;transform: scaleX(0.9611);transform-origin:0 0;">I think you may be looking for ...</div>
<svg class="a" style="left:3768.0px;top:1848.0px;" width="26" height="24" viewBox="0 0 26 24"><path d="M3 10V5H21M17 1L21 5L17 9M23 14V19H5M9 23L5 19L9 15" stroke="#333" stroke-width="2" fill="none"/></svg>
<svg class="a" style="left:3121.0px;top:1956.0px;" width="32" height="32" viewBox="0 0 32 32"><rect x="1.5" y="3" width="26" height="25" rx="4" stroke="#222" stroke-width="2.2" fill="none"/><circle cx="9" cy="10" r="2.5" stroke="#222" stroke-width="2" fill="none"/><path d="M2 23L10 16L15 20L21 14L27 19" stroke="#222" stroke-width="2" fill="none"/><rect x="18" y="20" width="14" height="12" fill="#fafafa"/><path d="M25 31V21M21 25L25 21L29 25" stroke="#222" stroke-width="2" fill="none"/></svg>
<div class="a" style="left:3175.5px;top:1929.0px;width:622.0px;height:86.0px;border-radius:14px;background:#fff;border:3px solid #1a66e6;box-shadow:0 4px 12px rgba(0,0,0,0.16);"></div>
<div class="a" style="left:3199.0px;top:1962.0px;width:2.0px;height:34.0px;background:#222;"></div>
<div class="t" style="left:3201.0px;top:1957.0px;font-size:29.5px;line-height:29.5px;color:#666;transform: scaleX(0.9452);transform-origin:0 0;">Ask me a question</div>
<svg class="a" style="left:3338.0px;top:1953.0px;" width="16" height="32" viewBox="0 0 16 32"><path d="M2 1.5Q8 1.5 8 5V27Q8 30.5 2 30.5M14 1.5Q8 1.5 8 5M8 27Q8 30.5 14 30.5M5 16H11" stroke="#111" stroke-width="2" fill="none"/></svg>
<svg class="a" style="left:3733.0px;top:1955.0px;" width="42" height="40" viewBox="0 0 42 40"><path d="M1 20L41 1L31 39L20 26Z" fill="#8a8a8a"/><path d="M20 26L41 1L13 23Z" fill="#6e6e6e"/></svg>
<div class="t" style="left:3457.7px;top:2029.0px;font-size:26.0px;line-height:26.0px;color:#777;transform:translateX(-50%) scaleX(0.9754);transform-origin:50% 0;">AI can make mistakes. Consider checking important</div>
<div class="t" style="left:3457.7px;top:2067.6px;font-size:26.0px;line-height:26.0px;color:#777;transform:translateX(-50%) scaleX(0.9963);transform-origin:50% 0;">information for accuracy.</div>
<svg class="a" style="left:0;top:0" width="3838" height="2108"><path d="M0 78H11A11 11 0 0 0 0 89Z" fill="#c9dbf6"/><path d="M3838 78H3827A11 11 0 0 1 3838 89Z" fill="#c9dbf6"/><path d="M0 0H11A11 11 0 0 0 0 11Z" fill="#2a2a2a"/><path d="M3838 0H3827A11 11 0 0 1 3838 11Z" fill="#2a2a2a"/><path d="M0 2108H20A20 20 0 0 1 0 2088Z" fill="#1d1d1d"/><path d="M3838 2108H3818A20 20 0 0 0 3838 2088Z" fill="#1d1d1d"/><rect x="0" y="0" width="1.2" height="2108" fill="#c4c8cf"/><rect x="3836.8" y="0" width="1.2" height="2108" fill="#c4c8cf"/><rect x="0" y="0" width="3838" height="1.2" fill="#9aa6b8"/></svg>
</body></html>
